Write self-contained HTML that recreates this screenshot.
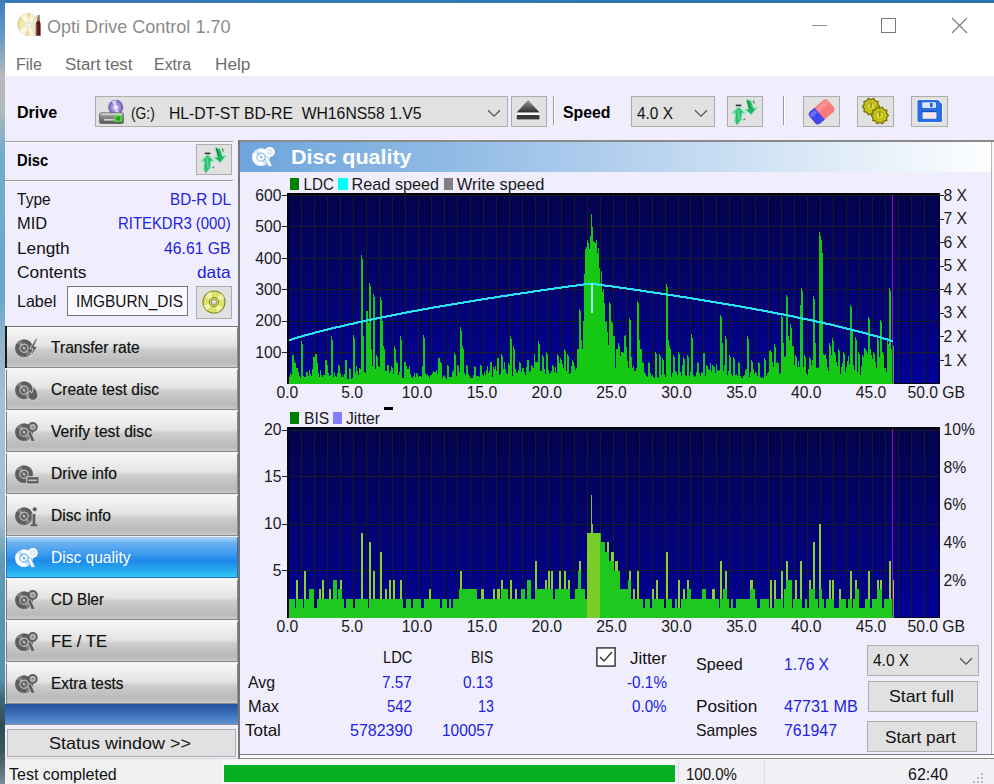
<!DOCTYPE html>
<html><head><meta charset="utf-8"><title>Opti Drive Control 1.70</title>
<style>
html,body{margin:0;padding:0;}
body{width:994px;height:784px;overflow:hidden;position:relative;background:#f0eefd;font-family:"Liberation Sans",sans-serif;}
.abs,.t,.btn,.nav,.tb{position:absolute;}
.t{white-space:nowrap;transform-origin:0 0;}
.tb{background:#e1e1e1;border:1px solid #adadad;box-sizing:border-box;}
.nav{left:6px;width:232px;height:41px;box-sizing:border-box;border:1px solid #8a8a8a;border-top-color:#fafafa;border-left-color:#7a7a7a;
 background:linear-gradient(#f6f6f6 0%,#e4e4e4 45%,#cdcdcd 55%,#b9b9b9 88%,#c9c9c9 100%);}
.nav.sel{background:linear-gradient(#a6d2f7 0%,#6cb2f1 12%,#3f9bee 40%,#1e88e8 58%,#25a6ee 80%,#31c6f3 100%);border-color:#2a6fc0;border-top-color:#9cc8f4;}
.btn{background:#e1e1e1;border:1px solid #adadad;box-sizing:border-box;}
</style></head><body>

<div class="abs" style="left:0;top:0;width:994px;height:3px;background:linear-gradient(90deg,#3c78b4,#2f7ab2 50%,#2a74aa);"></div>
<div class="abs" style="left:0;top:0;width:5px;height:784px;background:linear-gradient(#3f7dbd 0px,#6c9cc8 40px,#b4bab6 75px,#b0bab8 110px,#74aacb 150px,#6aa6c9 300px,#8fb4cc 340px,#a9c0d0 400px,#a6bfcf 520px,#5f9bb4 560px,#5690a8 680px,#3f6676 700px,#2f4c56 725px,#3c545c 750px,#5c7078 770px,#7c8c90 784px);"></div>
<div class="abs" style="left:5px;top:3px;width:989px;height:73px;background:#fff;"></div>
<svg class="abs" style="left:16px;top:12px" width="26" height="26" viewBox="16 12 26 26">
<defs><radialGradient id="cdg" cx="50%" cy="50%" r="50%"><stop offset="0" stop-color="#ffffff"/><stop offset="0.2" stop-color="#f0ead0"/><stop offset="0.55" stop-color="#f3e8b0"/><stop offset="0.9" stop-color="#ecdc9c"/><stop offset="1" stop-color="#cfbf88"/></radialGradient></defs>
<circle cx="28.6" cy="24.5" r="11.3" fill="url(#cdg)"/>
<path d="M28.6 24.5 L20.5 16.8 A11.3 11.3 0 0 1 26.5 13.4Z M28.6 24.5 L24.5 35 A11.3 11.3 0 0 1 19 30.5Z M28.6 24.5 L31 13.5 A11.3 11.3 0 0 1 35.5 15.6Z M28.6 24.5 L34 34.4 A11.3 11.3 0 0 1 29.5 35.8Z" fill="#fffdf0" opacity="0.75"/>
<circle cx="28.6" cy="24.5" r="2.6" fill="#e4e0d4"/>
<circle cx="28.9" cy="24.9" r="1.3" fill="#ffffff"/>
<rect x="33.2" y="16" width="2.8" height="19.5" fill="#ece6dc" opacity="0.9"/>
<path d="M37.9 15 L39.4 15 L39.6 21 Q40.6 22.6 40.6 24.4 L40.6 35.8 L35.8 35.8 L35.8 24.4 Q35.8 22.6 37.4 21Z" fill="#5c1618"/>
<path d="M37.9 15 L39.4 15 L39.6 21 L37.4 21Z" fill="#8a8a7c"/>
<path d="M36.3 24.6 L37.2 24.2 L37.2 35 L36.3 35Z" fill="#a88484" opacity="0.8"/>
</svg>
<span class="t" id="t0" style="left:46.5px;top:17.8px;font-size:18.6px;line-height:18.6px;color:#8c8c8c;transform:scaleX(0.9703);">Opti Drive Control 1.70</span>
<svg class="abs" style="left:800px;top:10px" width="180" height="32" viewBox="0 0 180 32" shape-rendering="crispEdges">
<rect x="12" y="15" width="15" height="1" fill="#8f8f8f"/>
<rect x="81.5" y="8.5" width="14" height="14" fill="none" stroke="#7a7a7a" stroke-width="1"/>
<g shape-rendering="geometricPrecision" stroke="#7a7a7a" stroke-width="1.1"><line x1="152" y1="8" x2="167" y2="23"/><line x1="167" y1="8" x2="152" y2="23"/></g>
</svg>
<span class="t" id="t1" style="left:16.2px;top:55.8px;font-size:17.3px;line-height:17.3px;color:#6c6c6c;transform:scaleX(0.9261);">File</span>
<span class="t" id="t2" style="left:64.6px;top:55.8px;font-size:17.3px;line-height:17.3px;color:#6c6c6c;transform:scaleX(0.9746);">Start test</span>
<span class="t" id="t3" style="left:154.3px;top:55.8px;font-size:17.3px;line-height:17.3px;color:#6c6c6c;transform:scaleX(0.9221);">Extra</span>
<span class="t" id="t4" style="left:214.5px;top:55.8px;font-size:17.3px;line-height:17.3px;color:#6c6c6c;transform:scaleX(0.9931);">Help</span>
<span class="t" id="t5" style="left:17.3px;top:103.7px;font-size:16.4px;line-height:16.4px;color:#000;font-weight:bold;transform:scaleX(0.9801);">Drive</span>
<div class="tb" style="left:95px;top:96px;width:413px;height:31px;"></div>
<svg class="abs" style="left:98px;top:98px" width="28" height="28" viewBox="98 98 28 28">
<defs><radialGradient id="dg" cx="50%" cy="50%" r="55%"><stop offset="0" stop-color="#f4eeff"/><stop offset="0.45" stop-color="#a894dc"/><stop offset="1" stop-color="#5c4aa0"/></radialGradient>
<linearGradient id="db" x1="0" y1="0" x2="0" y2="1"><stop offset="0" stop-color="#c4c4c4"/><stop offset="0.35" stop-color="#8c8c8c"/><stop offset="1" stop-color="#585858"/></linearGradient></defs>
<circle cx="115.7" cy="107.3" r="7.5" fill="url(#dg)"/>
<path d="M115.7 107.3 L111.5 101.5 A7.5 7.5 0 0 1 116.5 99.9Z M115.7 107.3 L119.9 113 A7.5 7.5 0 0 1 114.9 114.7Z" fill="#efe8ff" opacity="0.75"/>
<circle cx="115.7" cy="107.3" r="1.6" fill="#f8f4ff"/>
<rect x="99.6" y="112.8" width="23.8" height="10.6" rx="1.5" fill="url(#db)" stroke="#5a5a5a" stroke-width="0.8"/>
<rect x="101" y="113.5" width="21" height="1.6" fill="#d8d8d8" opacity="0.8"/>
<rect x="104" y="119.2" width="10" height="1.3" fill="#e8e8e8"/>
<rect x="114.2" y="115" width="8" height="7" rx="1.3" fill="#58d048"/>
<circle cx="118.2" cy="118.5" r="2.2" fill="#2c9a24"/>
</svg>
<span class="t" id="t6" style="left:130.7px;top:105.0px;font-size:16.5px;line-height:16.5px;color:#111;transform:scaleX(0.8374);">(G:)</span>
<span class="t" id="t7" style="left:168.5px;top:105.0px;font-size:16.5px;line-height:16.5px;color:#111;transform:scaleX(0.9540);">HL-DT-ST BD-RE&nbsp; WH16NS58 1.V5</span>
<svg class="abs" style="left:487px;top:109px" width="14" height="9" viewBox="0 0 14 9"><path d="M1 1.2 L7 7.2 L13 1.2" fill="none" stroke="#555" stroke-width="1.25"/></svg>
<div class="tb" style="left:511px;top:96px;width:36px;height:31px;"></div>
<svg class="abs" style="left:511px;top:96px" width="36" height="31" viewBox="511 96 36 31">
<defs><linearGradient id="ej" x1="0" y1="0" x2="0" y2="1"><stop offset="0" stop-color="#9a9a9a"/><stop offset="1" stop-color="#2c2c2c"/></linearGradient></defs>
<path d="M528.1 100 L539.6 112.6 L516.6 112.6Z" fill="url(#ej)"/>
<rect x="516.8" y="112.8" width="22.6" height="2.2" fill="#f8f8f8"/>
<rect x="516.8" y="115" width="22.6" height="4.4" fill="#3a3a3a"/>
</svg>
<div class="abs" style="left:553px;top:96px;width:1px;height:29px;background:#9a9a9a;"></div><div class="abs" style="left:554px;top:96px;width:1px;height:29px;background:#fff;"></div>
<span class="t" id="t8" style="left:563.0px;top:103.7px;font-size:16.4px;line-height:16.4px;color:#000;font-weight:bold;transform:scaleX(0.9654);">Speed</span>
<div class="tb" style="left:631px;top:96px;width:84px;height:31px;"></div>
<span class="t" id="t9" style="left:636.5px;top:105.0px;font-size:16.5px;line-height:16.5px;color:#111;transform:scaleX(0.9343);">4.0 X</span>
<svg class="abs" style="left:694px;top:109px" width="14" height="9" viewBox="0 0 14 9"><path d="M1 1.2 L7 7.2 L13 1.2" fill="none" stroke="#555" stroke-width="1.25"/></svg>
<div class="tb" style="left:727px;top:96px;width:36px;height:31px;"></div>
<svg class="abs" style="left:727px;top:96px" width="36" height="31" viewBox="0 0 36 31">
<path d="M11.7 10.6 L18.2 17.2 L15 17 L14.6 23.5 L11 27.8 L7.8 26.2 L8.2 17 L5.2 17.2Z" fill="#2cc070" stroke="#8fe6bc" stroke-width="1.1" stroke-linejoin="round"/>
<path d="M11.2 14 L12 24" stroke="#5ad898" stroke-width="1.6" fill="none"/>
<path d="M19.4 3.4 L24.2 4.8 L26.6 12.2 L30 11.8 L24.2 18.8 L17.8 13.4 L21.4 13 Z" fill="#1fb862" stroke="#8fe6bc" stroke-width="1" stroke-linejoin="round"/>
<path d="M20.4 4.4 L23 12.5" stroke="#178048" stroke-width="1.5" fill="none"/>
<rect x="8.8" y="8.6" width="5.6" height="1.6" fill="#333"/>
<path d="M26.2 4.5 l1.2 3 M16.6 24.2 l1.4 -1.6 M9.4 26.8 l1 1.6" stroke="#3a7a52" stroke-width="1.1"/>
</svg>
<div class="abs" style="left:783px;top:96px;width:1px;height:29px;background:#9a9a9a;"></div><div class="abs" style="left:784px;top:96px;width:1px;height:29px;background:#fff;"></div>
<div class="tb" style="left:803px;top:96px;width:37px;height:31px;"></div>
<svg class="abs" style="left:803px;top:96px" width="37" height="31" viewBox="803 96 37 31">
<g transform="rotate(-41 821.5 112)">
<rect x="809.5" y="104.2" width="24.5" height="15.6" rx="3.8" fill="#f87c7c"/>
<path d="M813.3 104.2 L819 104.2 L819 119.8 L813.3 119.8 A3.8 3.8 0 0 1 809.5 116 L809.5 108 A3.8 3.8 0 0 1 813.3 104.2Z" fill="#4448ec"/>
<rect x="810.5" y="106" width="7.5" height="4" rx="2" fill="#7478ff" opacity="0.8"/>
<rect x="819.5" y="106" width="13.5" height="4.5" rx="2" fill="#fc9c9c" opacity="0.8"/>
</g></svg>
<div class="tb" style="left:857px;top:96px;width:37px;height:31px;"></div>
<svg class="abs" style="left:857px;top:96px" width="37" height="31" viewBox="857 96 37 31"><polygon points="879.6,106.6 877.7,108.8 878.0,111.7 875.1,112.3 873.7,114.8 871.0,113.7 868.3,114.8 866.9,112.3 864.0,111.7 864.3,108.8 862.4,106.6 864.3,104.4 864.0,101.5 866.9,100.9 868.3,98.4 871.0,99.5 873.7,98.4 875.1,100.9 878.0,101.5 877.7,104.4" fill="#c6c414" stroke="#747208" stroke-width="1.3"/><circle cx="871" cy="106.6" r="3.9" fill="#dede28" stroke="#9a980c" stroke-width="0.6"/><rect x="870.2" y="102.3" width="1.6" height="6.0" fill="#8a8a60"/><polygon points="888.4,115.4 886.5,117.6 886.8,120.5 883.9,121.1 882.5,123.6 879.8,122.5 877.1,123.6 875.7,121.1 872.8,120.5 873.1,117.6 871.2,115.4 873.1,113.2 872.8,110.3 875.7,109.7 877.1,107.2 879.8,108.3 882.5,107.2 883.9,109.7 886.8,110.3 886.5,113.2" fill="#c6c414" stroke="#747208" stroke-width="1.3"/><circle cx="879.8" cy="115.4" r="3.9" fill="#dede28" stroke="#9a980c" stroke-width="0.6"/><rect x="879.0" y="111.1" width="1.6" height="6.0" fill="#8a8a60"/></svg>
<div class="tb" style="left:911px;top:96px;width:37px;height:31px;"></div>
<svg class="abs" style="left:911px;top:96px" width="37" height="31" viewBox="911 96 37 31">
<path d="M919 100 L938 100 L942 104 L942 120.5 Q942 122 940.5 122 L919 122 Q917.4 122 917.4 120.5 L917.4 101.6 Q917.4 100 919 100Z" fill="#2a6ce4" stroke="#f4f8ff" stroke-width="1.6" paint-order="stroke"/>
<rect x="922.2" y="102.3" width="13.8" height="5.6" rx="0.8" fill="#d4e6ff"/>
<rect x="930" y="103" width="2.6" height="4.2" fill="#2a5cd0"/>
<rect x="922" y="110.8" width="15" height="1.2" fill="#1c4cb4"/>
<rect x="922.6" y="112.2" width="13.8" height="6.6" rx="0.6" fill="#f6e8e8"/>
</svg>
<div class="abs" style="left:5px;top:141px;width:228px;height:1px;background:#9c9c9c;"></div><div class="abs" style="left:5px;top:142px;width:228px;height:1px;background:#fff;"></div>
<div class="abs" style="left:5px;top:180px;width:228px;height:1px;background:#9c9c9c;"></div><div class="abs" style="left:5px;top:181px;width:228px;height:1px;background:#fff;"></div>
<span class="t" id="t10" style="left:17.3px;top:151.7px;font-size:16.4px;line-height:16.4px;color:#000;font-weight:bold;transform:scaleX(0.9011);">Disc</span>
<div class="tb" style="left:196px;top:144px;width:36px;height:31px;"></div>
<svg class="abs" style="left:196px;top:144px" width="36" height="31" viewBox="0 0 36 31">
<path d="M11.7 10.6 L18.2 17.2 L15 17 L14.6 23.5 L11 27.8 L7.8 26.2 L8.2 17 L5.2 17.2Z" fill="#2cc070" stroke="#8fe6bc" stroke-width="1.1" stroke-linejoin="round"/>
<path d="M11.2 14 L12 24" stroke="#5ad898" stroke-width="1.6" fill="none"/>
<path d="M19.4 3.4 L24.2 4.8 L26.6 12.2 L30 11.8 L24.2 18.8 L17.8 13.4 L21.4 13 Z" fill="#1fb862" stroke="#8fe6bc" stroke-width="1" stroke-linejoin="round"/>
<path d="M20.4 4.4 L23 12.5" stroke="#178048" stroke-width="1.5" fill="none"/>
<rect x="8.8" y="8.6" width="5.6" height="1.6" fill="#333"/>
<path d="M26.2 4.5 l1.2 3 M16.6 24.2 l1.4 -1.6 M9.4 26.8 l1 1.6" stroke="#3a7a52" stroke-width="1.1"/>
</svg>
<span class="t" id="t11" style="left:17.3px;top:190.7px;font-size:16.5px;line-height:16.5px;color:#111;transform:scaleX(0.9418);">Type</span>
<span class="t" id="t12" style="left:169.6px;top:190.7px;font-size:16.5px;line-height:16.5px;color:#2222dd;transform:scaleX(0.9240);">BD-R DL</span>
<span class="t" id="t13" style="left:17.3px;top:214.9px;font-size:16.5px;line-height:16.5px;color:#111;transform:scaleX(0.9950);">MID</span>
<span class="t" id="t14" style="left:118.0px;top:214.9px;font-size:16.5px;line-height:16.5px;color:#2222dd;transform:scaleX(0.9029);">RITEKDR3 (000)</span>
<span class="t" id="t15" style="left:17.3px;top:239.6px;font-size:16.5px;line-height:16.5px;color:#111;transform:scaleX(1.0442);">Length</span>
<span class="t" id="t16" style="left:164.0px;top:239.6px;font-size:16.5px;line-height:16.5px;color:#2222dd;transform:scaleX(0.9553);">46.61 GB</span>
<span class="t" id="t17" style="left:17.3px;top:263.8px;font-size:16.5px;line-height:16.5px;color:#111;transform:scaleX(1.0508);">Contents</span>
<span class="t" id="t18" style="left:197.0px;top:263.8px;font-size:16.5px;line-height:16.5px;color:#2222dd;transform:scaleX(1.0459);">data</span>
<span class="t" id="t19" style="left:17.3px;top:292.8px;font-size:16.5px;line-height:16.5px;color:#111;transform:scaleX(0.9734);">Label</span>
<div class="abs" style="left:67px;top:286.3px;width:121px;height:29.4px;box-sizing:border-box;background:#f9f8ff;border:1.4px solid #767676;"></div>
<span class="t" id="t20" style="left:76.0px;top:292.8px;font-size:16.5px;line-height:16.5px;color:#111;transform:scaleX(0.9336);">IMGBURN_DIS</span>
<div class="tb" style="left:196px;top:286px;width:36px;height:33px;"></div>
<svg class="abs" style="left:200.5px;top:289.2px" width="26" height="26" viewBox="0 0 26 26">
<circle cx="13" cy="13" r="11" fill="#dde16a" stroke="#85882c" stroke-width="1.1"/>
<path d="M13 13 L4.2 7.4 A11 11 0 0 1 9.6 2.6Z M13 13 L21.8 18.6 A11 11 0 0 1 16.4 23.4Z M13 13 L20 4.6 A11 11 0 0 1 23.4 9.4Z M13 13 L6 21.4 A11 11 0 0 1 2.6 16.6Z" fill="#f3f5b4" opacity="0.85"/>
<circle cx="13" cy="13" r="4.6" fill="#cfd25c" stroke="#8a8c34" stroke-width="1"/>
<circle cx="13" cy="13" r="2.7" fill="#dcdcdc" stroke="#8e9040" stroke-width="0.8"/>
</svg>
<div class="abs" style="left:5px;top:325.5px;width:233px;height:1.2px;background:#74747a;"></div>
<div class="nav" style="top:327px;"></div>
<svg class="abs" style="left:13.5px;top:336.8px" width="29" height="24.6" viewBox="0 0 26 22"><circle cx="9" cy="10" r="8" fill="#5e5e5e"/><path d="M9 10 L2.5 5.5 A8 8 0 0 1 6.5 2.4Z M9 10 L15.5 14.5 A8 8 0 0 1 11.5 17.6Z" fill="#dcdcdc" opacity="0.28"/><circle cx="9" cy="10" r="3.7" fill="none" stroke="#dcdcdc" stroke-width="1.1" opacity="0.75"/><circle cx="9" cy="10" r="1.2" fill="#dcdcdc" opacity="0.7"/><path d="M19.5 1.5 L14.2 10.5 L17 10.5 L14.5 18.5 L21 8.5 L18 8.5 L21 1.5Z" fill="#5e5e5e" stroke="#dcdcdc" stroke-width="0.7"/></svg>
<span class="t" id="t21" style="left:50.5px;top:339.1px;font-size:17px;line-height:17px;color:#111;transform:scaleX(0.9174);text-shadow:0 0 1px rgba(0,0,0,0.35);">Transfer rate</span>
<div class="nav" style="top:369px;"></div>
<svg class="abs" style="left:13.5px;top:378.8px" width="29" height="24.6" viewBox="0 0 26 22"><circle cx="9" cy="10" r="8" fill="#5e5e5e"/><path d="M9 10 L2.5 5.5 A8 8 0 0 1 6.5 2.4Z M9 10 L15.5 14.5 A8 8 0 0 1 11.5 17.6Z" fill="#dcdcdc" opacity="0.28"/><circle cx="9" cy="10" r="3.7" fill="none" stroke="#dcdcdc" stroke-width="1.1" opacity="0.75"/><circle cx="9" cy="10" r="1.2" fill="#dcdcdc" opacity="0.7"/><path d="M17 6.5 Q21.5 10.5 21.5 14.5 A4.6 4.6 0 0 1 12.3 14.5 Q12.5 12 14.5 10.5 Q15 12.5 16 12.5 Q17.5 10 17 6.5Z" fill="#5e5e5e" stroke="#dcdcdc" stroke-width="0.8"/></svg>
<span class="t" id="t22" style="left:50.5px;top:381.1px;font-size:17px;line-height:17px;color:#111;transform:scaleX(0.9144);text-shadow:0 0 1px rgba(0,0,0,0.35);">Create test disc</span>
<div class="nav" style="top:411px;"></div>
<svg class="abs" style="left:13.5px;top:420.8px" width="29" height="24.6" viewBox="0 0 26 22"><circle cx="9" cy="10" r="8" fill="#5e5e5e"/><path d="M9 10 L2.5 5.5 A8 8 0 0 1 6.5 2.4Z M9 10 L15.5 14.5 A8 8 0 0 1 11.5 17.6Z" fill="#dcdcdc" opacity="0.28"/><circle cx="9" cy="10" r="3.7" fill="none" stroke="#dcdcdc" stroke-width="1.1" opacity="0.75"/><circle cx="9" cy="10" r="1.2" fill="#dcdcdc" opacity="0.7"/><path d="M14.5 8.5 L19 18 L15.6 18.4 L12.5 11Z" fill="#5e5e5e" stroke="#dcdcdc" stroke-width="0.6"/><circle cx="16.8" cy="5.4" r="3.6" fill="#b8b8b8" stroke="#5e5e5e" stroke-width="1.8"/><circle cx="16.8" cy="5.4" r="1.2" fill="#5e5e5e" opacity="0.5"/></svg>
<span class="t" id="t23" style="left:50.5px;top:423.1px;font-size:17px;line-height:17px;color:#111;transform:scaleX(0.9215);text-shadow:0 0 1px rgba(0,0,0,0.35);">Verify test disc</span>
<div class="nav" style="top:453px;"></div>
<svg class="abs" style="left:13.5px;top:462.8px" width="29" height="24.6" viewBox="0 0 26 22"><circle cx="9" cy="10" r="8" fill="#5e5e5e"/><path d="M9 10 L2.5 5.5 A8 8 0 0 1 6.5 2.4Z M9 10 L15.5 14.5 A8 8 0 0 1 11.5 17.6Z" fill="#dcdcdc" opacity="0.28"/><circle cx="9" cy="10" r="3.7" fill="none" stroke="#dcdcdc" stroke-width="1.1" opacity="0.75"/><circle cx="9" cy="10" r="1.2" fill="#dcdcdc" opacity="0.7"/><rect x="11.5" y="12.2" width="11" height="6.6" rx="1" fill="#5e5e5e" stroke="#dcdcdc" stroke-width="0.8"/><rect x="13.2" y="14.8" width="7.6" height="1.4" fill="#dcdcdc" opacity="0.8"/></svg>
<span class="t" id="t24" style="left:50.5px;top:465.1px;font-size:17px;line-height:17px;color:#111;transform:scaleX(0.9191);text-shadow:0 0 1px rgba(0,0,0,0.35);">Drive info</span>
<div class="nav" style="top:495px;"></div>
<svg class="abs" style="left:13.5px;top:504.8px" width="29" height="24.6" viewBox="0 0 26 22"><circle cx="9" cy="10" r="8" fill="#5e5e5e"/><path d="M9 10 L2.5 5.5 A8 8 0 0 1 6.5 2.4Z M9 10 L15.5 14.5 A8 8 0 0 1 11.5 17.6Z" fill="#dcdcdc" opacity="0.28"/><circle cx="9" cy="10" r="3.7" fill="none" stroke="#dcdcdc" stroke-width="1.1" opacity="0.75"/><circle cx="9" cy="10" r="1.2" fill="#dcdcdc" opacity="0.7"/><rect x="16.2" y="7.8" width="3.4" height="10.6" fill="#5e5e5e" stroke="#dcdcdc" stroke-width="0.7"/><circle cx="18.6" cy="3.8" r="1.9" fill="#5e5e5e"/><rect x="15" y="17.2" width="5.8" height="1.8" fill="#5e5e5e"/></svg>
<span class="t" id="t25" style="left:50.5px;top:507.1px;font-size:17px;line-height:17px;color:#111;transform:scaleX(0.9204);text-shadow:0 0 1px rgba(0,0,0,0.35);">Disc info</span>
<div class="nav sel" style="top:537px;"></div>
<svg class="abs" style="left:13.5px;top:546.8px" width="29" height="24.6" viewBox="0 0 26 22"><circle cx="9" cy="10" r="8" fill="#fff"/><path d="M9 10 L2.5 5.5 A8 8 0 0 1 6.5 2.4Z M9 10 L15.5 14.5 A8 8 0 0 1 11.5 17.6Z" fill="#3a98ee" opacity="0.28"/><circle cx="9" cy="10" r="3.7" fill="none" stroke="#3a98ee" stroke-width="1.1" opacity="0.75"/><circle cx="9" cy="10" r="1.2" fill="#3a98ee" opacity="0.7"/><path d="M14.5 8.5 L19 18 L15.6 18.4 L12.5 11Z" fill="#fff" stroke="#3a98ee" stroke-width="0.6"/><circle cx="16.8" cy="5.4" r="3.6" fill="#d6e8fa" stroke="#fff" stroke-width="1.8"/><circle cx="16.8" cy="5.4" r="1.2" fill="#fff" opacity="0.5"/></svg>
<span class="t" id="t26" style="left:50.5px;top:549.1px;font-size:17px;line-height:17px;color:#fff;transform:scaleX(0.9146);">Disc quality</span>
<div class="nav" style="top:579px;"></div>
<svg class="abs" style="left:13.5px;top:588.8px" width="29" height="24.6" viewBox="0 0 26 22"><circle cx="9" cy="10" r="8" fill="#5e5e5e"/><path d="M9 10 L2.5 5.5 A8 8 0 0 1 6.5 2.4Z M9 10 L15.5 14.5 A8 8 0 0 1 11.5 17.6Z" fill="#dcdcdc" opacity="0.28"/><circle cx="9" cy="10" r="3.7" fill="none" stroke="#dcdcdc" stroke-width="1.1" opacity="0.75"/><circle cx="9" cy="10" r="1.2" fill="#dcdcdc" opacity="0.7"/><path d="M14.5 8.5 L19 18 L15.6 18.4 L12.5 11Z" fill="#5e5e5e" stroke="#dcdcdc" stroke-width="0.6"/><circle cx="16.8" cy="5.4" r="3.6" fill="#b8b8b8" stroke="#5e5e5e" stroke-width="1.8"/><circle cx="16.8" cy="5.4" r="1.2" fill="#5e5e5e" opacity="0.5"/></svg>
<span class="t" id="t27" style="left:50.5px;top:591.1px;font-size:17px;line-height:17px;color:#111;transform:scaleX(0.8905);text-shadow:0 0 1px rgba(0,0,0,0.35);">CD Bler</span>
<div class="nav" style="top:621px;"></div>
<svg class="abs" style="left:13.5px;top:630.8px" width="29" height="24.6" viewBox="0 0 26 22"><circle cx="9" cy="10" r="8" fill="#5e5e5e"/><path d="M9 10 L2.5 5.5 A8 8 0 0 1 6.5 2.4Z M9 10 L15.5 14.5 A8 8 0 0 1 11.5 17.6Z" fill="#dcdcdc" opacity="0.28"/><circle cx="9" cy="10" r="3.7" fill="none" stroke="#dcdcdc" stroke-width="1.1" opacity="0.75"/><circle cx="9" cy="10" r="1.2" fill="#dcdcdc" opacity="0.7"/><path d="M14.5 8.5 L19 18 L15.6 18.4 L12.5 11Z" fill="#5e5e5e" stroke="#dcdcdc" stroke-width="0.6"/><circle cx="16.8" cy="5.4" r="3.6" fill="#b8b8b8" stroke="#5e5e5e" stroke-width="1.8"/><circle cx="16.8" cy="5.4" r="1.2" fill="#5e5e5e" opacity="0.5"/></svg>
<span class="t" id="t28" style="left:50.5px;top:633.1px;font-size:17px;line-height:17px;color:#111;transform:scaleX(0.9771);text-shadow:0 0 1px rgba(0,0,0,0.35);">FE / TE</span>
<div class="nav" style="top:663px;"></div>
<svg class="abs" style="left:13.5px;top:672.8px" width="29" height="24.6" viewBox="0 0 26 22"><circle cx="9" cy="10" r="8" fill="#5e5e5e"/><path d="M9 10 L2.5 5.5 A8 8 0 0 1 6.5 2.4Z M9 10 L15.5 14.5 A8 8 0 0 1 11.5 17.6Z" fill="#dcdcdc" opacity="0.28"/><circle cx="9" cy="10" r="3.7" fill="none" stroke="#dcdcdc" stroke-width="1.1" opacity="0.75"/><circle cx="9" cy="10" r="1.2" fill="#dcdcdc" opacity="0.7"/><path d="M14.5 8.5 L19 18 L15.6 18.4 L12.5 11Z" fill="#5e5e5e" stroke="#dcdcdc" stroke-width="0.6"/><circle cx="16.8" cy="5.4" r="3.6" fill="#b8b8b8" stroke="#5e5e5e" stroke-width="1.8"/><circle cx="16.8" cy="5.4" r="1.2" fill="#5e5e5e" opacity="0.5"/></svg>
<span class="t" id="t29" style="left:50.5px;top:675.1px;font-size:17px;line-height:17px;color:#111;transform:scaleX(0.9027);text-shadow:0 0 1px rgba(0,0,0,0.35);">Extra tests</span>
<div class="abs" style="left:5px;top:326px;width:1.6px;height:42px;background:#1c1c1c;"></div>
<div class="abs" style="left:5px;top:704px;width:233px;height:21px;background:linear-gradient(#26509c,#3c70ba 50%,#6496d4);"></div><div class="abs" style="left:5px;top:724px;width:233px;height:1px;background:#8c8c94;"></div>
<div class="btn" style="left:7px;top:729px;width:229px;height:28px;"></div>
<span class="t" id="t30" style="left:49.0px;top:734.8px;font-size:16.5px;line-height:16.5px;color:#111;transform:scaleX(1.0902);">Status window &gt;&gt;</span>
<div class="abs" style="left:238px;top:140px;width:756px;height:2px;background:#8a8a8a;"></div>
<div class="abs" style="left:238px;top:140px;width:2px;height:619px;background:#767676;"></div>
<div class="abs" style="left:991px;top:142px;width:1px;height:612px;background:#b4b4b4;"></div><div class="abs" style="left:992px;top:142px;width:2px;height:612px;background:#f8f8f8;"></div>
<div class="abs" style="left:240px;top:754px;width:754px;height:1px;background:#7c7c7c;"></div><div class="abs" style="left:240px;top:755px;width:754px;height:3px;background:#fafaff;"></div><div class="abs" style="left:238px;top:758px;width:756px;height:1px;background:#8a8a8a;"></div>
<div class="abs" style="left:240px;top:142px;width:751px;height:30px;background:linear-gradient(90deg,#6fa5dc 0%,#8cb8e4 25%,#b2cfed 50%,#d9e8f6 75%,#fdfeff 100%);"></div>
<svg class="abs" style="left:250.5px;top:145.5px" width="29" height="24.6" viewBox="0 0 26 22"><circle cx="9" cy="10" r="8" fill="#fff"/><path d="M9 10 L2.5 5.5 A8 8 0 0 1 6.5 2.4Z M9 10 L15.5 14.5 A8 8 0 0 1 11.5 17.6Z" fill="#78aade" opacity="0.28"/><circle cx="9" cy="10" r="3.7" fill="none" stroke="#78aade" stroke-width="1.1" opacity="0.75"/><circle cx="9" cy="10" r="1.2" fill="#78aade" opacity="0.7"/><path d="M14.5 8.5 L19 18 L15.6 18.4 L12.5 11Z" fill="#fff" stroke="#78aade" stroke-width="0.6"/><circle cx="16.8" cy="5.4" r="3.6" fill="#d6e8fa" stroke="#fff" stroke-width="1.8"/><circle cx="16.8" cy="5.4" r="1.2" fill="#fff" opacity="0.5"/></svg>
<span class="t" id="t31" style="left:291.0px;top:147.2px;font-size:20.5px;line-height:20.5px;color:#fff;font-weight:bold;transform:scaleX(1.0473);">Disc quality</span>
<svg class="abs" style="left:240px;top:173px" width="750" height="240" viewBox="240 173 750 240" shape-rendering="crispEdges" font-family="Liberation Sans, sans-serif">
<defs><linearGradient id="bgldc" x1="0" y1="0" x2="0" y2="1"><stop offset="0" stop-color="#03034c"/><stop offset="0.5" stop-color="#03036e"/><stop offset="1" stop-color="#020298"/></linearGradient></defs>
<rect x="287" y="193" width="653" height="191" fill="#06060c"/>
<rect x="289" y="195" width="650" height="188" fill="url(#bgldc)"/>
<path d="M301 195v188 M314 195v188 M327 195v188 M340 195v188 M353 195v188 M366 195v188 M379 195v188 M392 195v188 M405 195v188 M418 195v188 M431 195v188 M444 195v188 M457 195v188 M470 195v188 M483 195v188 M496 195v188 M509 195v188 M522 195v188 M535 195v188 M548 195v188 M561 195v188 M574 195v188 M587 195v188 M600 195v188 M613 195v188 M626 195v188 M639 195v188 M652 195v188 M665 195v188 M678 195v188 M690 195v188 M703 195v188 M716 195v188 M729 195v188 M742 195v188 M755 195v188 M768 195v188 M781 195v188 M794 195v188 M807 195v188 M820 195v188 M833 195v188 M846 195v188 M859 195v188 M872 195v188 M885 195v188 M898 195v188 M911 195v188 M924 195v188 M289 352h650 M289 321h650 M289 289h650 M289 258h650 M289 226h650 M289 195h650" stroke="#1a1a24" stroke-width="1.6" fill="none" transform="translate(0.5,0.5)"/>
<path d="M289 383.5v-6.1h1v6.1zM290 383.5v-10.3h1v10.3zM291 383.5v-8.3h1v8.3zM292 383.5v-28.3h1v28.3zM293 383.5v-28.3h1v28.3zM294 383.5v-22.0h1v22.0zM295 383.5v-20.4h1v20.4zM296 383.5v-16.0h1v16.0zM297 383.5v-15.3h1v15.3zM298 383.5v-11.3h1v11.3zM299 383.5v-7.1h1v7.1zM300 383.5v-5.2h1v5.2zM301 383.5v-42.4h1v42.4zM302 383.5v-39.4h1v39.4zM303 383.5v-7.4h1v7.4zM304 383.5v-7.0h1v7.0zM305 383.5v-6.5h1v6.5zM306 383.5v-11.4h1v11.4zM307 383.5v-11.7h1v11.7zM308 383.5v-7.9h1v7.9zM309 383.5v-13.9h1v13.9zM310 383.5v-9.3h1v9.3zM311 383.5v-7.2h1v7.2zM312 383.5v-14.6h1v14.6zM313 383.5v-26.7h1v26.7zM314 383.5v-26.7h1v26.7zM315 383.5v-29.8h1v29.8zM316 383.5v-29.8h1v29.8zM317 383.5v-20.4h1v20.4zM318 383.5v-10.9h1v10.9zM319 383.5v-7.0h1v7.0zM320 383.5v-13.1h1v13.1zM321 383.5v-8.1h1v8.1zM322 383.5v-7.0h1v7.0zM323 383.5v-8.6h1v8.6zM324 383.5v-8.6h1v8.6zM325 383.5v-23.6h1v23.6zM326 383.5v-23.6h1v23.6zM327 383.5v-18.8h1v18.8zM328 383.5v-11.0h1v11.0zM329 383.5v-8.0h1v8.0zM330 383.5v-8.3h1v8.3zM331 383.5v-47.1h1v47.1zM332 383.5v-43.8h1v43.8zM333 383.5v-6.3h1v6.3zM334 383.5v-11.6h1v11.6zM335 383.5v-7.6h1v7.6zM336 383.5v-6.3h1v6.3zM337 383.5v-10.8h1v10.8zM338 383.5v-18.8h1v18.8zM339 383.5v-17.5h1v17.5zM340 383.5v-10.2h1v10.2zM341 383.5v-7.0h1v7.0zM342 383.5v-8.7h1v8.7zM343 383.5v-6.2h1v6.2zM344 383.5v-9.8h1v9.8zM345 383.5v-23.6h1v23.6zM346 383.5v-23.6h1v23.6zM347 383.5v-4.8h1v4.8zM348 383.5v-4.6h1v4.6zM349 383.5v-15.7h1v15.7zM350 383.5v-14.6h1v14.6zM351 383.5v-4.3h1v4.3zM352 383.5v-6.0h1v6.0zM353 383.5v-48.7h1v48.7zM354 383.5v-45.3h1v45.3zM355 383.5v-10.1h1v10.1zM356 383.5v-17.2h1v17.2zM357 383.5v-12.4h1v12.4zM358 383.5v-9.0h1v9.0zM359 383.5v-15.6h1v15.6zM360 383.5v-14.8h1v14.8zM361 383.5v-128.7h1v128.7zM362 383.5v-124.9h1v124.9zM363 383.5v-47.1h1v47.1zM364 383.5v-11.7h1v11.7zM365 383.5v-11.0h1v11.0zM366 383.5v-72.2h1v72.2zM367 383.5v-72.2h1v72.2zM368 383.5v-60.9h1v60.9zM369 383.5v-100.5h1v100.5zM370 383.5v-97.5h1v97.5zM371 383.5v-35.0h1v35.0zM372 383.5v-17.1h1v17.1zM373 383.5v-89.5h1v89.5zM374 383.5v-86.8h1v86.8zM375 383.5v-14.9h1v14.9zM376 383.5v-28.3h1v28.3zM377 383.5v-26.3h1v26.3zM378 383.5v-17.8h1v17.8zM379 383.5v-16.8h1v16.8zM380 383.5v-86.3h1v86.3zM381 383.5v-83.8h1v83.8zM382 383.5v-62.8h1v62.8zM383 383.5v-37.7h1v37.7zM384 383.5v-35.0h1v35.0zM385 383.5v-12.4h1v12.4zM386 383.5v-12.8h1v12.8zM387 383.5v-18.8h1v18.8zM388 383.5v-18.8h1v18.8zM389 383.5v-10.9h1v10.9zM390 383.5v-12.7h1v12.7zM391 383.5v-17.3h1v17.3zM392 383.5v-15.7h1v15.7zM393 383.5v-10.0h1v10.0zM394 383.5v-37.7h1v37.7zM395 383.5v-35.0h1v35.0zM396 383.5v-22.0h1v22.0zM397 383.5v-20.4h1v20.4zM398 383.5v-8.9h1v8.9zM399 383.5v-11.2h1v11.2zM400 383.5v-47.1h1v47.1zM401 383.5v-43.8h1v43.8zM402 383.5v-5.4h1v5.4zM403 383.5v-5.7h1v5.7zM404 383.5v-22.0h1v22.0zM405 383.5v-22.0h1v22.0zM406 383.5v-18.0h1v18.0zM407 383.5v-14.6h1v14.6zM408 383.5v-14.9h1v14.9zM409 383.5v-17.3h1v17.3zM410 383.5v-10.0h1v10.0zM411 383.5v-6.4h1v6.4zM412 383.5v-5.9h1v5.9zM413 383.5v-7.1h1v7.1zM414 383.5v-10.5h1v10.5zM415 383.5v-6.8h1v6.8zM416 383.5v-10.8h1v10.8zM417 383.5v-9.8h1v9.8zM418 383.5v-6.7h1v6.7zM419 383.5v-7.8h1v7.8zM420 383.5v-7.6h1v7.6zM421 383.5v-6.2h1v6.2zM422 383.5v-17.5h1v17.5zM423 383.5v-48.7h1v48.7zM424 383.5v-45.3h1v45.3zM425 383.5v-10.8h1v10.8zM426 383.5v-8.7h1v8.7zM427 383.5v-9.6h1v9.6zM428 383.5v-7.4h1v7.4zM429 383.5v-5.5h1v5.5zM430 383.5v-8.3h1v8.3zM431 383.5v-8.7h1v8.7zM432 383.5v-10.6h1v10.6zM433 383.5v-12.3h1v12.3zM434 383.5v-11.2h1v11.2zM435 383.5v-11.8h1v11.8zM436 383.5v-13.4h1v13.4zM437 383.5v-9.7h1v9.7zM438 383.5v-25.1h1v25.1zM439 383.5v-25.1h1v25.1zM440 383.5v-22.0h1v22.0zM441 383.5v-20.4h1v20.4zM442 383.5v-5.7h1v5.7zM443 383.5v-7.6h1v7.6zM444 383.5v-8.1h1v8.1zM445 383.5v-7.0h1v7.0zM446 383.5v-5.0h1v5.0zM447 383.5v-18.8h1v18.8zM448 383.5v-17.5h1v17.5zM449 383.5v-6.9h1v6.9zM450 383.5v-6.9h1v6.9zM451 383.5v-6.7h1v6.7zM452 383.5v-12.0h1v12.0zM453 383.5v-13.7h1v13.7zM454 383.5v-30.5h1v30.5zM455 383.5v-28.3h1v28.3zM456 383.5v-8.0h1v8.0zM457 383.5v-18.8h1v18.8zM458 383.5v-17.5h1v17.5zM459 383.5v-11.1h1v11.1zM460 383.5v-56.8h1v56.8zM461 383.5v-52.9h1v52.9zM462 383.5v-37.7h1v37.7zM463 383.5v-35.0h1v35.0zM464 383.5v-10.1h1v10.1zM465 383.5v-8.7h1v8.7zM466 383.5v-18.8h1v18.8zM467 383.5v-17.5h1v17.5zM468 383.5v-10.0h1v10.0zM469 383.5v-7.2h1v7.2zM470 383.5v-5.9h1v5.9zM471 383.5v-5.7h1v5.7zM472 383.5v-6.0h1v6.0zM473 383.5v-8.6h1v8.6zM474 383.5v-17.3h1v17.3zM475 383.5v-16.1h1v16.1zM476 383.5v-7.4h1v7.4zM477 383.5v-7.6h1v7.6zM478 383.5v-7.5h1v7.5zM479 383.5v-6.3h1v6.3zM480 383.5v-18.8h1v18.8zM481 383.5v-17.5h1v17.5zM482 383.5v-10.0h1v10.0zM483 383.5v-7.6h1v7.6zM484 383.5v-11.8h1v11.8zM485 383.5v-8.8h1v8.8zM486 383.5v-14.0h1v14.0zM487 383.5v-17.7h1v17.7zM488 383.5v-10.8h1v10.8zM489 383.5v-12.2h1v12.2zM490 383.5v-22.0h1v22.0zM491 383.5v-22.0h1v22.0zM492 383.5v-6.5h1v6.5zM493 383.5v-16.1h1v16.1zM494 383.5v-14.1h1v14.1zM495 383.5v-17.4h1v17.4zM496 383.5v-12.8h1v12.8zM497 383.5v-25.1h1v25.1zM498 383.5v-25.1h1v25.1zM499 383.5v-8.9h1v8.9zM500 383.5v-9.2h1v9.2zM501 383.5v-29.8h1v29.8zM502 383.5v-27.7h1v27.7zM503 383.5v-14.5h1v14.5zM504 383.5v-21.5h1v21.5zM505 383.5v-14.4h1v14.4zM506 383.5v-10.3h1v10.3zM507 383.5v-9.8h1v9.8zM508 383.5v-20.9h1v20.9zM509 383.5v-18.7h1v18.7zM510 383.5v-48.0h1v48.0zM511 383.5v-44.7h1v44.7zM512 383.5v-7.7h1v7.7zM513 383.5v-37.7h1v37.7zM514 383.5v-35.0h1v35.0zM515 383.5v-14.9h1v14.9zM516 383.5v-11.1h1v11.1zM517 383.5v-10.2h1v10.2zM518 383.5v-13.5h1v13.5zM519 383.5v-22.0h1v22.0zM520 383.5v-20.4h1v20.4zM521 383.5v-11.7h1v11.7zM522 383.5v-15.4h1v15.4zM523 383.5v-15.3h1v15.3zM524 383.5v-11.4h1v11.4zM525 383.5v-8.1h1v8.1zM526 383.5v-16.7h1v16.7zM527 383.5v-23.6h1v23.6zM528 383.5v-23.6h1v23.6zM529 383.5v-11.6h1v11.6zM530 383.5v-12.3h1v12.3zM531 383.5v-18.8h1v18.8zM532 383.5v-17.5h1v17.5zM533 383.5v-15.6h1v15.6zM534 383.5v-29.4h1v29.4zM535 383.5v-21.4h1v21.4zM536 383.5v-21.1h1v21.1zM537 383.5v-21.2h1v21.2zM538 383.5v-43.0h1v43.0zM539 383.5v-40.0h1v40.0zM540 383.5v-12.8h1v12.8zM541 383.5v-12.7h1v12.7zM542 383.5v-28.3h1v28.3zM543 383.5v-26.3h1v26.3zM544 383.5v-14.8h1v14.8zM545 383.5v-10.0h1v10.0zM546 383.5v-31.4h1v31.4zM547 383.5v-29.2h1v29.2zM548 383.5v-13.7h1v13.7zM549 383.5v-10.0h1v10.0zM550 383.5v-10.7h1v10.7zM551 383.5v-13.0h1v13.0zM552 383.5v-18.8h1v18.8zM553 383.5v-17.5h1v17.5zM554 383.5v-12.0h1v12.0zM555 383.5v-16.5h1v16.5zM556 383.5v-10.6h1v10.6zM557 383.5v-29.9h1v29.9zM558 383.5v-27.7h1v27.7zM559 383.5v-20.9h1v20.9zM560 383.5v-25.1h1v25.1zM561 383.5v-23.4h1v23.4zM562 383.5v-19.7h1v19.7zM563 383.5v-15.7h1v15.7zM564 383.5v-34.5h1v34.5zM565 383.5v-32.1h1v32.1zM566 383.5v-12.4h1v12.4zM567 383.5v-29.8h1v29.8zM568 383.5v-27.7h1v27.7zM569 383.5v-9.4h1v9.4zM570 383.5v-10.3h1v10.3zM571 383.5v-17.2h1v17.2zM572 383.5v-23.6h1v23.6zM573 383.5v-21.9h1v21.9zM574 383.5v-18.0h1v18.0zM575 383.5v-13.8h1v13.8zM576 383.5v-15.7h1v15.7zM577 383.5v-34.5h1v34.5zM578 383.5v-34.5h1v34.5zM579 383.5v-74.7h1v74.7zM580 383.5v-72.5h1v72.5zM581 383.5v-44.0h1v44.0zM582 383.5v-34.5h1v34.5zM583 383.5v-62.8h1v62.8zM584 383.5v-109.9h1v109.9zM585 383.5v-134.2h1v134.2zM586 383.5v-136.1h1v136.1zM587 383.5v-143.4h1v143.4zM588 383.5v-140.5h1v140.5zM589 383.5v-134.3h1v134.3zM590 383.5v-147.6h1v147.6zM591 383.5v-169.6h1v169.6zM592 383.5v-157.0h1v157.0zM593 383.5v-142.9h1v142.9zM594 383.5v-141.2h1v141.2zM595 383.5v-140.6h1v140.6zM596 383.5v-143.2h1v143.2zM597 383.5v-130.9h1v130.9zM598 383.5v-135.1h1v135.1zM599 383.5v-115.2h1v115.2zM600 383.5v-100.1h1v100.1zM601 383.5v-112.6h1v112.6zM602 383.5v-91.1h1v91.1zM603 383.5v-94.7h1v94.7zM604 383.5v-80.9h1v80.9zM605 383.5v-61.7h1v61.7zM606 383.5v-62.6h1v62.6zM607 383.5v-51.2h1v51.2zM608 383.5v-38.7h1v38.7zM609 383.5v-81.6h1v81.6zM610 383.5v-79.2h1v79.2zM611 383.5v-62.8h1v62.8zM612 383.5v-60.9h1v60.9zM613 383.5v-47.1h1v47.1zM614 383.5v-47.1h1v47.1zM615 383.5v-15.6h1v15.6zM616 383.5v-34.5h1v34.5zM617 383.5v-34.5h1v34.5zM618 383.5v-40.8h1v40.8zM619 383.5v-38.0h1v38.0zM620 383.5v-27.3h1v27.3zM621 383.5v-31.4h1v31.4zM622 383.5v-31.4h1v31.4zM623 383.5v-30.1h1v30.1zM624 383.5v-47.8h1v47.8zM625 383.5v-48.6h1v48.6zM626 383.5v-36.8h1v36.8zM627 383.5v-22.1h1v22.1zM628 383.5v-15.8h1v15.8zM629 383.5v-65.9h1v65.9zM630 383.5v-64.0h1v64.0zM631 383.5v-26.3h1v26.3zM632 383.5v-15.8h1v15.8zM633 383.5v-17.7h1v17.7zM634 383.5v-12.7h1v12.7zM635 383.5v-12.7h1v12.7zM636 383.5v-15.5h1v15.5zM637 383.5v-82.6h1v82.6zM638 383.5v-80.1h1v80.1zM639 383.5v-44.0h1v44.0zM640 383.5v-34.5h1v34.5zM641 383.5v-34.5h1v34.5zM642 383.5v-22.0h1v22.0zM643 383.5v-20.4h1v20.4zM644 383.5v-12.0h1v12.0zM645 383.5v-9.2h1v9.2zM646 383.5v-7.1h1v7.1zM647 383.5v-6.6h1v6.6zM648 383.5v-22.0h1v22.0zM649 383.5v-20.4h1v20.4zM650 383.5v-10.1h1v10.1zM651 383.5v-7.2h1v7.2zM652 383.5v-8.8h1v8.8zM653 383.5v-6.6h1v6.6zM654 383.5v-5.9h1v5.9zM655 383.5v-31.4h1v31.4zM656 383.5v-29.2h1v29.2zM657 383.5v-6.6h1v6.6zM658 383.5v-5.9h1v5.9zM659 383.5v-29.8h1v29.8zM660 383.5v-27.7h1v27.7zM661 383.5v-8.2h1v8.2zM662 383.5v-25.1h1v25.1zM663 383.5v-23.4h1v23.4zM664 383.5v-9.7h1v9.7zM665 383.5v-7.0h1v7.0zM666 383.5v-99.2h1v99.2zM667 383.5v-96.2h1v96.2zM668 383.5v-43.8h1v43.8zM669 383.5v-37.7h1v37.7zM670 383.5v-35.0h1v35.0zM671 383.5v-7.0h1v7.0zM672 383.5v-10.1h1v10.1zM673 383.5v-28.3h1v28.3zM674 383.5v-26.3h1v26.3zM675 383.5v-12.1h1v12.1zM676 383.5v-11.5h1v11.5zM677 383.5v-8.4h1v8.4zM678 383.5v-31.4h1v31.4zM679 383.5v-29.2h1v29.2zM680 383.5v-11.2h1v11.2zM681 383.5v-7.8h1v7.8zM682 383.5v-18.6h1v18.6zM683 383.5v-26.7h1v26.7zM684 383.5v-24.8h1v24.8zM685 383.5v-8.5h1v8.5zM686 383.5v-7.9h1v7.9zM687 383.5v-28.3h1v28.3zM688 383.5v-26.3h1v26.3zM689 383.5v-7.6h1v7.6zM690 383.5v-11.9h1v11.9zM691 383.5v-49.3h1v49.3zM692 383.5v-45.8h1v45.8zM693 383.5v-8.9h1v8.9zM694 383.5v-6.8h1v6.8zM695 383.5v-7.5h1v7.5zM696 383.5v-11.8h1v11.8zM697 383.5v-22.0h1v22.0zM698 383.5v-20.4h1v20.4zM699 383.5v-10.1h1v10.1zM700 383.5v-7.2h1v7.2zM701 383.5v-11.3h1v11.3zM702 383.5v-10.9h1v10.9zM703 383.5v-30.5h1v30.5zM704 383.5v-30.5h1v30.5zM705 383.5v-7.2h1v7.2zM706 383.5v-18.8h1v18.8zM707 383.5v-17.5h1v17.5zM708 383.5v-14.7h1v14.7zM709 383.5v-13.7h1v13.7zM710 383.5v-20.3h1v20.3zM711 383.5v-11.8h1v11.8zM712 383.5v-18.8h1v18.8zM713 383.5v-17.5h1v17.5zM714 383.5v-16.2h1v16.2zM715 383.5v-10.1h1v10.1zM716 383.5v-19.8h1v19.8zM717 383.5v-13.1h1v13.1zM718 383.5v-12.1h1v12.1zM719 383.5v-13.8h1v13.8zM720 383.5v-68.5h1v68.5zM721 383.5v-66.4h1v66.4zM722 383.5v-40.9h1v40.9zM723 383.5v-12.4h1v12.4zM724 383.5v-18.4h1v18.4zM725 383.5v-48.0h1v48.0zM726 383.5v-44.7h1v44.7zM727 383.5v-8.5h1v8.5zM728 383.5v-12.2h1v12.2zM729 383.5v-28.3h1v28.3zM730 383.5v-26.3h1v26.3zM731 383.5v-9.7h1v9.7zM732 383.5v-7.2h1v7.2zM733 383.5v-26.7h1v26.7zM734 383.5v-24.8h1v24.8zM735 383.5v-9.0h1v9.0zM736 383.5v-10.0h1v10.0zM737 383.5v-7.2h1v7.2zM738 383.5v-22.0h1v22.0zM739 383.5v-20.4h1v20.4zM740 383.5v-7.1h1v7.1zM741 383.5v-6.0h1v6.0zM742 383.5v-5.5h1v5.5zM743 383.5v-7.6h1v7.6zM744 383.5v-8.7h1v8.7zM745 383.5v-13.6h1v13.6zM746 383.5v-14.4h1v14.4zM747 383.5v-48.0h1v48.0zM748 383.5v-44.7h1v44.7zM749 383.5v-6.5h1v6.5zM750 383.5v-11.4h1v11.4zM751 383.5v-23.6h1v23.6zM752 383.5v-21.9h1v21.9zM753 383.5v-14.5h1v14.5zM754 383.5v-10.0h1v10.0zM755 383.5v-11.7h1v11.7zM756 383.5v-10.9h1v10.9zM757 383.5v-7.5h1v7.5zM758 383.5v-22.0h1v22.0zM759 383.5v-20.4h1v20.4zM760 383.5v-6.3h1v6.3zM761 383.5v-6.0h1v6.0zM762 383.5v-6.3h1v6.3zM763 383.5v-5.5h1v5.5zM764 383.5v-25.1h1v25.1zM765 383.5v-23.4h1v23.4zM766 383.5v-7.7h1v7.7zM767 383.5v-10.1h1v10.1zM768 383.5v-12.0h1v12.0zM769 383.5v-32.7h1v32.7zM770 383.5v-33.9h1v33.9zM771 383.5v-31.5h1v31.5zM772 383.5v-21.5h1v21.5zM773 383.5v-17.0h1v17.0zM774 383.5v-39.2h1v39.2zM775 383.5v-36.5h1v36.5zM776 383.5v-20.1h1v20.1zM777 383.5v-22.0h1v22.0zM778 383.5v-20.4h1v20.4zM779 383.5v-9.7h1v9.7zM780 383.5v-10.7h1v10.7zM781 383.5v-68.5h1v68.5zM782 383.5v-66.4h1v66.4zM783 383.5v-40.9h1v40.9zM784 383.5v-26.9h1v26.9zM785 383.5v-27.6h1v27.6zM786 383.5v-88.9h1v88.9zM787 383.5v-86.2h1v86.2zM788 383.5v-47.1h1v47.1zM789 383.5v-43.8h1v43.8zM790 383.5v-59.7h1v59.7zM791 383.5v-55.5h1v55.5zM792 383.5v-37.7h1v37.7zM793 383.5v-37.7h1v37.7zM794 383.5v-18.1h1v18.1zM795 383.5v-28.3h1v28.3zM796 383.5v-26.3h1v26.3zM797 383.5v-16.9h1v16.9zM798 383.5v-22.3h1v22.3zM799 383.5v-16.7h1v16.7zM800 383.5v-78.5h1v78.5zM801 383.5v-95.1h1v95.1zM802 383.5v-92.3h1v92.3zM803 383.5v-16.3h1v16.3zM804 383.5v-28.3h1v28.3zM805 383.5v-26.3h1v26.3zM806 383.5v-10.5h1v10.5zM807 383.5v-8.7h1v8.7zM808 383.5v-14.3h1v14.3zM809 383.5v-26.7h1v26.7zM810 383.5v-24.8h1v24.8zM811 383.5v-18.6h1v18.6zM812 383.5v-24.0h1v24.0zM813 383.5v-87.6h1v87.6zM814 383.5v-85.0h1v85.0zM815 383.5v-40.9h1v40.9zM816 383.5v-16.0h1v16.0zM817 383.5v-16.6h1v16.6zM818 383.5v-15.7h1v15.7zM819 383.5v-151.3h1v151.3zM820 383.5v-147.6h1v147.6zM821 383.5v-143.2h1v143.2zM822 383.5v-131.0h1v131.0zM823 383.5v-30.0h1v30.0zM824 383.5v-28.3h1v28.3zM825 383.5v-30.0h1v30.0zM826 383.5v-24.5h1v24.5zM827 383.5v-16.4h1v16.4zM828 383.5v-12.1h1v12.1zM829 383.5v-40.8h1v40.8zM830 383.5v-38.0h1v38.0zM831 383.5v-28.8h1v28.8zM832 383.5v-45.5h1v45.5zM833 383.5v-42.3h1v42.3zM834 383.5v-31.4h1v31.4zM835 383.5v-29.2h1v29.2zM836 383.5v-21.3h1v21.3zM837 383.5v-17.6h1v17.6zM838 383.5v-34.5h1v34.5zM839 383.5v-32.1h1v32.1zM840 383.5v-9.7h1v9.7zM841 383.5v-16.8h1v16.8zM842 383.5v-20.4h1v20.4zM843 383.5v-31.4h1v31.4zM844 383.5v-29.2h1v29.2zM845 383.5v-11.7h1v11.7zM846 383.5v-16.5h1v16.5zM847 383.5v-22.1h1v22.1zM848 383.5v-27.8h1v27.8zM849 383.5v-19.4h1v19.4zM850 383.5v-78.5h1v78.5zM851 383.5v-76.1h1v76.1zM852 383.5v-52.6h1v52.6zM853 383.5v-18.9h1v18.9zM854 383.5v-13.1h1v13.1zM855 383.5v-46.8h1v46.8zM856 383.5v-43.5h1v43.5zM857 383.5v-11.6h1v11.6zM858 383.5v-31.4h1v31.4zM859 383.5v-29.2h1v29.2zM860 383.5v-8.7h1v8.7zM861 383.5v-17.6h1v17.6zM862 383.5v-28.3h1v28.3zM863 383.5v-26.3h1v26.3zM864 383.5v-35.6h1v35.6zM865 383.5v-34.5h1v34.5zM866 383.5v-32.1h1v32.1zM867 383.5v-30.0h1v30.0zM868 383.5v-66.6h1v66.6zM869 383.5v-64.6h1v64.6zM870 383.5v-35.0h1v35.0zM871 383.5v-28.4h1v28.4zM872 383.5v-24.4h1v24.4zM873 383.5v-31.4h1v31.4zM874 383.5v-29.2h1v29.2zM875 383.5v-21.7h1v21.7zM876 383.5v-15.6h1v15.6zM877 383.5v-46.8h1v46.8zM878 383.5v-43.5h1v43.5zM879 383.5v-26.4h1v26.4zM880 383.5v-63.4h1v63.4zM881 383.5v-61.5h1v61.5zM882 383.5v-31.4h1v31.4zM883 383.5v-29.2h1v29.2zM884 383.5v-16.0h1v16.0zM885 383.5v-15.6h1v15.6zM886 383.5v-11.9h1v11.9zM887 383.5v-43.0h1v43.0zM888 383.5v-40.0h1v40.0zM889 383.5v-95.8h1v95.8zM890 383.5v-92.9h1v92.9zM891 383.5v-35.0h1v35.0zM892 383.5v-40.8h1v40.8zM893 383.5v-38.0h1v38.0z" fill="#14c814"/>
<rect x="892" y="195" width="1.4" height="188" fill="#9c10a8"/>
<path d="M289 340L290 340L291 340L292 339L293 339L294 339L295 338L296 338L297 338L298 337L299 337L300 337L301 337L302 336L303 336L304 336L305 335L306 335L307 335L308 335L309 334L310 334L311 334L312 334L313 333L314 333L315 333L316 332L317 332L318 332L319 332L320 331L321 331L322 331L323 331L324 330L325 330L326 330L327 330L328 329L329 329L330 329L331 329L332 328L333 328L334 328L335 328L336 327L337 327L338 327L339 327L340 327L341 326L342 326L343 326L344 326L345 325L346 325L347 325L348 325L349 324L350 324L351 324L352 324L353 324L354 323L355 323L356 323L357 323L358 322L359 322L360 322L361 322L362 322L363 321L364 321L365 321L366 321L367 320L368 320L369 320L370 320L371 320L372 319L373 319L374 319L375 319L376 319L377 318L378 318L379 318L380 318L381 318L382 317L383 317L384 317L385 317L386 317L387 316L388 316L389 316L390 316L391 316L392 315L393 315L394 315L395 315L396 315L397 314L398 314L399 314L400 314L401 314L402 313L403 313L404 313L405 313L406 313L407 312L408 312L409 312L410 312L411 312L412 311L413 311L414 311L415 311L416 311L417 311L418 310L419 310L420 310L421 310L422 310L423 309L424 309L425 309L426 309L427 309L428 309L429 308L430 308L431 308L432 308L433 308L434 307L435 307L436 307L437 307L438 307L439 307L440 306L441 306L442 306L443 306L444 306L445 306L446 305L447 305L448 305L449 305L450 305L451 305L452 304L453 304L454 304L455 304L456 304L457 304L458 303L459 303L460 303L461 303L462 303L463 303L464 302L465 302L466 302L467 302L468 302L469 302L470 301L471 301L472 301L473 301L474 301L475 301L476 300L477 300L478 300L479 300L480 300L481 300L482 299L483 299L484 299L485 299L486 299L487 299L488 298L489 298L490 298L491 298L492 298L493 298L494 298L495 297L496 297L497 297L498 297L499 297L500 297L501 296L502 296L503 296L504 296L505 296L506 296L507 296L508 295L509 295L510 295L511 295L512 295L513 295L514 294L515 294L516 294L517 294L518 294L519 294L520 294L521 293L522 293L523 293L524 293L525 293L526 293L527 293L528 292L529 292L530 292L531 292L532 292L533 292L534 291L535 291L536 291L537 291L538 291L539 291L540 291L541 290L542 290L543 290L544 290L545 290L546 290L547 290L548 289L549 289L550 289L551 289L552 289L553 289L554 289L555 288L556 288L557 288L558 288L559 288L560 288L561 288L562 287L563 287L564 287L565 287L566 287L567 287L568 287L569 286L570 286L571 286L572 286L573 286L574 286L575 286L576 286L577 285L578 285L579 285L580 285L581 285L582 285L583 285L584 284L585 284L586 284L587 284L588 284L589 284L590 284L591 284L592 284L593 284L594 284L595 284L596 284L597 284L598 285L599 285L600 285L601 285L602 285L603 285L604 285L605 286L606 286L607 286L608 286L609 286L610 286L611 286L612 286L613 287L614 287L615 287L616 287L617 287L618 287L619 287L620 288L621 288L622 288L623 288L624 288L625 288L626 288L627 289L628 289L629 289L630 289L631 289L632 289L633 289L634 290L635 290L636 290L637 290L638 290L639 290L640 290L641 291L642 291L643 291L644 291L645 291L646 291L647 292L648 292L649 292L650 292L651 292L652 292L653 292L654 293L655 293L656 293L657 293L658 293L659 293L660 293L661 294L662 294L663 294L664 294L665 294L666 294L667 295L668 295L669 295L670 295L671 295L672 295L673 295L674 296L675 296L676 296L677 296L678 296L679 296L680 297L681 297L682 297L683 297L684 297L685 297L686 297L687 298L688 298L689 298L690 298L691 298L692 298L693 299L694 299L695 299L696 299L697 299L698 299L699 300L700 300L701 300L702 300L703 300L704 300L705 301L706 301L707 301L708 301L709 301L710 301L711 302L712 302L713 302L714 302L715 302L716 302L717 303L718 303L719 303L720 303L721 303L722 303L723 304L724 304L725 304L726 304L727 304L728 304L729 305L730 305L731 305L732 305L733 305L734 305L735 306L736 306L737 306L738 306L739 306L740 306L741 307L742 307L743 307L744 307L745 307L746 308L747 308L748 308L749 308L750 308L751 308L752 309L753 309L754 309L755 309L756 309L757 310L758 310L759 310L760 310L761 310L762 310L763 311L764 311L765 311L766 311L767 311L768 312L769 312L770 312L771 312L772 312L773 313L774 313L775 313L776 313L777 313L778 314L779 314L780 314L781 314L782 314L783 314L784 315L785 315L786 315L787 315L788 315L789 316L790 316L791 316L792 316L793 316L794 317L795 317L796 317L797 317L798 318L799 318L800 318L801 318L802 318L803 319L804 319L805 319L806 319L807 319L808 320L809 320L810 320L811 320L812 320L813 321L814 321L815 321L816 321L817 322L818 322L819 322L820 322L821 322L822 323L823 323L824 323L825 323L826 324L827 324L828 324L829 324L830 324L831 325L832 325L833 325L834 325L835 326L836 326L837 326L838 326L839 327L840 327L841 327L842 327L843 328L844 328L845 328L846 328L847 329L848 329L849 329L850 329L851 330L852 330L853 330L854 330L855 331L856 331L857 331L858 331L859 332L860 332L861 332L862 332L863 333L864 333L865 333L866 333L867 334L868 334L869 334L870 335L871 335L872 335L873 335L874 336L875 336L876 336L877 336L878 337L879 337L880 337L881 338L882 338L883 338L884 339L885 339L886 339L887 339L888 340L889 340L890 340L891 341L892 341L893 341" stroke="#2ce6f6" stroke-width="1.9" fill="none" shape-rendering="geometricPrecision"/>
<rect x="591" y="283" width="1.5" height="30" fill="#9af0e8"/>
<rect x="282" y="352" width="5" height="1" fill="#222"/>
<rect x="282" y="321" width="5" height="1" fill="#222"/>
<rect x="282" y="289" width="5" height="1" fill="#222"/>
<rect x="282" y="258" width="5" height="1" fill="#222"/>
<rect x="282" y="226" width="5" height="1" fill="#222"/>
<rect x="282" y="195" width="5" height="1" fill="#222"/>
<rect x="940" y="360" width="4" height="1" fill="#222"/>
<rect x="940" y="336" width="4" height="1" fill="#222"/>
<rect x="940" y="313" width="4" height="1" fill="#222"/>
<rect x="940" y="289" width="4" height="1" fill="#222"/>
<rect x="940" y="266" width="4" height="1" fill="#222"/>
<rect x="940" y="242" width="4" height="1" fill="#222"/>
<rect x="940" y="219" width="4" height="1" fill="#222"/>
<rect x="940" y="195" width="4" height="1" fill="#222"/>
<rect x="290" y="178" width="9" height="12" fill="#008000"/>
<rect x="338" y="178" width="9.5" height="12" fill="#00ffff"/>
<rect x="444" y="178" width="8.5" height="12" fill="#808080"/>
<g font-size="15.7px" fill="#1a1a1a" shape-rendering="geometricPrecision"><text x="281.5" y="357.7" text-anchor="end">100</text><text x="281.5" y="326.3" text-anchor="end">200</text><text x="281.5" y="294.9" text-anchor="end">300</text><text x="281.5" y="263.5" text-anchor="end">400</text><text x="281.5" y="232.1" text-anchor="end">500</text><text x="281.5" y="200.7" text-anchor="end">600</text><text x="943.5" y="365.5">1 X</text><text x="943.5" y="342.0">2 X</text><text x="943.5" y="318.4">3 X</text><text x="943.5" y="294.9">4 X</text><text x="943.5" y="271.3">5 X</text><text x="943.5" y="247.7">6 X</text><text x="943.5" y="224.2">7 X</text><text x="943.5" y="200.6">8 X</text><text x="287.4" y="397.8" text-anchor="middle">0.0</text><text x="352.2" y="397.8" text-anchor="middle">5.0</text><text x="417.1" y="397.8" text-anchor="middle">10.0</text><text x="481.9" y="397.8" text-anchor="middle">15.0</text><text x="546.8" y="397.8" text-anchor="middle">20.0</text><text x="611.6" y="397.8" text-anchor="middle">25.0</text><text x="676.5" y="397.8" text-anchor="middle">30.0</text><text x="741.4" y="397.8" text-anchor="middle">35.0</text><text x="806.2" y="397.8" text-anchor="middle">40.0</text><text x="871.0" y="397.8" text-anchor="middle">45.0</text><text x="965" y="397.8" text-anchor="end">50.0 GB</text><text x="303.6" y="190.1" textLength="30.5" lengthAdjust="spacingAndGlyphs">LDC</text><text x="351.6" y="190.1" textLength="87.5" lengthAdjust="spacingAndGlyphs">Read speed</text><text x="456.8" y="190.1" textLength="87.5" lengthAdjust="spacingAndGlyphs">Write speed</text></g>
</svg>
<svg class="abs" style="left:240px;top:407px" width="750" height="240" viewBox="240 407 750 240" shape-rendering="crispEdges" font-family="Liberation Sans, sans-serif">
<defs><linearGradient id="bgbis" x1="0" y1="0" x2="0" y2="1"><stop offset="0" stop-color="#03034c"/><stop offset="0.5" stop-color="#03036e"/><stop offset="1" stop-color="#020298"/></linearGradient></defs>
<rect x="287" y="427" width="653" height="191" fill="#06060c"/>
<rect x="289" y="429" width="650" height="188" fill="url(#bgbis)"/>
<path d="M301 429v188 M314 429v188 M327 429v188 M340 429v188 M353 429v188 M366 429v188 M379 429v188 M392 429v188 M405 429v188 M418 429v188 M431 429v188 M444 429v188 M457 429v188 M470 429v188 M483 429v188 M496 429v188 M509 429v188 M522 429v188 M535 429v188 M548 429v188 M561 429v188 M574 429v188 M587 429v188 M600 429v188 M613 429v188 M626 429v188 M639 429v188 M652 429v188 M665 429v188 M678 429v188 M690 429v188 M703 429v188 M716 429v188 M729 429v188 M742 429v188 M755 429v188 M768 429v188 M781 429v188 M794 429v188 M807 429v188 M820 429v188 M833 429v188 M846 429v188 M859 429v188 M872 429v188 M885 429v188 M898 429v188 M911 429v188 M924 429v188 M289 570h650 M289 524h650 M289 476h650 M289 430h650" stroke="#1a1a24" stroke-width="1.6" fill="none" transform="translate(0.5,0.5)"/>
<path d="M289 617.5v-18.8h1v18.8zM290 617.5v-18.8h1v18.8zM291 617.5v-18.8h1v18.8zM292 617.5v-18.8h1v18.8zM293 617.5v-18.8h1v18.8zM294 617.5v-18.8h1v18.8zM295 617.5v-9.4h1v9.4zM296 617.5v-37.6h1v37.6zM297 617.5v-37.6h1v37.6zM298 617.5v-18.8h1v18.8zM299 617.5v-18.8h1v18.8zM300 617.5v-18.8h1v18.8zM301 617.5v-18.8h1v18.8zM302 617.5v-18.8h1v18.8zM303 617.5v-9.4h1v9.4zM304 617.5v-47.0h1v47.0zM305 617.5v-47.0h1v47.0zM306 617.5v-18.8h1v18.8zM307 617.5v-18.8h1v18.8zM308 617.5v-18.8h1v18.8zM309 617.5v-28.2h1v28.2zM310 617.5v-28.2h1v28.2zM311 617.5v-28.2h1v28.2zM312 617.5v-28.2h1v28.2zM313 617.5v-28.2h1v28.2zM314 617.5v-9.4h1v9.4zM315 617.5v-9.4h1v9.4zM316 617.5v-9.4h1v9.4zM317 617.5v-18.8h1v18.8zM318 617.5v-18.8h1v18.8zM319 617.5v-28.2h1v28.2zM320 617.5v-28.2h1v28.2zM321 617.5v-18.8h1v18.8zM322 617.5v-37.6h1v37.6zM323 617.5v-37.6h1v37.6zM324 617.5v-18.8h1v18.8zM325 617.5v-18.8h1v18.8zM326 617.5v-18.8h1v18.8zM327 617.5v-18.8h1v18.8zM328 617.5v-18.8h1v18.8zM329 617.5v-28.2h1v28.2zM330 617.5v-28.2h1v28.2zM331 617.5v-18.8h1v18.8zM332 617.5v-18.8h1v18.8zM333 617.5v-37.6h1v37.6zM334 617.5v-37.6h1v37.6zM335 617.5v-37.6h1v37.6zM336 617.5v-37.6h1v37.6zM337 617.5v-18.8h1v18.8zM338 617.5v-28.2h1v28.2zM339 617.5v-28.2h1v28.2zM340 617.5v-37.6h1v37.6zM341 617.5v-37.6h1v37.6zM342 617.5v-18.8h1v18.8zM343 617.5v-18.8h1v18.8zM344 617.5v-9.4h1v9.4zM345 617.5v-9.4h1v9.4zM346 617.5v-18.8h1v18.8zM347 617.5v-18.8h1v18.8zM348 617.5v-18.8h1v18.8zM349 617.5v-18.8h1v18.8zM350 617.5v-18.8h1v18.8zM351 617.5v-18.8h1v18.8zM352 617.5v-18.8h1v18.8zM353 617.5v-9.4h1v9.4zM354 617.5v-9.4h1v9.4zM355 617.5v-18.8h1v18.8zM356 617.5v-18.8h1v18.8zM357 617.5v-18.8h1v18.8zM358 617.5v-18.8h1v18.8zM359 617.5v-18.8h1v18.8zM360 617.5v-18.8h1v18.8zM361 617.5v-84.6h1v84.6zM362 617.5v-84.6h1v84.6zM363 617.5v-18.8h1v18.8zM364 617.5v-18.8h1v18.8zM365 617.5v-18.8h1v18.8zM366 617.5v-18.8h1v18.8zM367 617.5v-18.8h1v18.8zM368 617.5v-9.4h1v9.4zM369 617.5v-75.2h1v75.2zM370 617.5v-75.2h1v75.2zM371 617.5v-18.8h1v18.8zM372 617.5v-18.8h1v18.8zM373 617.5v-47.0h1v47.0zM374 617.5v-47.0h1v47.0zM375 617.5v-18.8h1v18.8zM376 617.5v-18.8h1v18.8zM377 617.5v-18.8h1v18.8zM378 617.5v-18.8h1v18.8zM379 617.5v-18.8h1v18.8zM380 617.5v-65.8h1v65.8zM381 617.5v-65.8h1v65.8zM382 617.5v-18.8h1v18.8zM383 617.5v-18.8h1v18.8zM384 617.5v-18.8h1v18.8zM385 617.5v-28.2h1v28.2zM386 617.5v-28.2h1v28.2zM387 617.5v-18.8h1v18.8zM388 617.5v-18.8h1v18.8zM389 617.5v-37.6h1v37.6zM390 617.5v-37.6h1v37.6zM391 617.5v-18.8h1v18.8zM392 617.5v-18.8h1v18.8zM393 617.5v-37.6h1v37.6zM394 617.5v-37.6h1v37.6zM395 617.5v-18.8h1v18.8zM396 617.5v-18.8h1v18.8zM397 617.5v-18.8h1v18.8zM398 617.5v-18.8h1v18.8zM399 617.5v-18.8h1v18.8zM400 617.5v-37.6h1v37.6zM401 617.5v-37.6h1v37.6zM402 617.5v-18.8h1v18.8zM403 617.5v-9.4h1v9.4zM404 617.5v-9.4h1v9.4zM405 617.5v-9.4h1v9.4zM406 617.5v-18.8h1v18.8zM407 617.5v-18.8h1v18.8zM408 617.5v-18.8h1v18.8zM409 617.5v-18.8h1v18.8zM410 617.5v-18.8h1v18.8zM411 617.5v-9.4h1v9.4zM412 617.5v-9.4h1v9.4zM413 617.5v-18.8h1v18.8zM414 617.5v-18.8h1v18.8zM415 617.5v-18.8h1v18.8zM416 617.5v-18.8h1v18.8zM417 617.5v-18.8h1v18.8zM418 617.5v-18.8h1v18.8zM419 617.5v-18.8h1v18.8zM420 617.5v-18.8h1v18.8zM421 617.5v-9.4h1v9.4zM422 617.5v-9.4h1v9.4zM423 617.5v-9.4h1v9.4zM424 617.5v-18.8h1v18.8zM425 617.5v-18.8h1v18.8zM426 617.5v-18.8h1v18.8zM427 617.5v-18.8h1v18.8zM428 617.5v-18.8h1v18.8zM429 617.5v-28.2h1v28.2zM430 617.5v-28.2h1v28.2zM431 617.5v-18.8h1v18.8zM432 617.5v-18.8h1v18.8zM433 617.5v-18.8h1v18.8zM434 617.5v-18.8h1v18.8zM435 617.5v-18.8h1v18.8zM436 617.5v-18.8h1v18.8zM437 617.5v-18.8h1v18.8zM438 617.5v-18.8h1v18.8zM439 617.5v-18.8h1v18.8zM440 617.5v-9.4h1v9.4zM441 617.5v-9.4h1v9.4zM442 617.5v-18.8h1v18.8zM443 617.5v-18.8h1v18.8zM444 617.5v-18.8h1v18.8zM445 617.5v-18.8h1v18.8zM446 617.5v-18.8h1v18.8zM447 617.5v-9.4h1v9.4zM448 617.5v-9.4h1v9.4zM449 617.5v-18.8h1v18.8zM450 617.5v-18.8h1v18.8zM451 617.5v-9.4h1v9.4zM452 617.5v-9.4h1v9.4zM453 617.5v-18.8h1v18.8zM454 617.5v-18.8h1v18.8zM455 617.5v-18.8h1v18.8zM456 617.5v-18.8h1v18.8zM457 617.5v-18.8h1v18.8zM458 617.5v-18.8h1v18.8zM459 617.5v-28.2h1v28.2zM460 617.5v-47.0h1v47.0zM461 617.5v-47.0h1v47.0zM462 617.5v-28.2h1v28.2zM463 617.5v-28.2h1v28.2zM464 617.5v-28.2h1v28.2zM465 617.5v-28.2h1v28.2zM466 617.5v-28.2h1v28.2zM467 617.5v-28.2h1v28.2zM468 617.5v-28.2h1v28.2zM469 617.5v-28.2h1v28.2zM470 617.5v-28.2h1v28.2zM471 617.5v-28.2h1v28.2zM472 617.5v-28.2h1v28.2zM473 617.5v-28.2h1v28.2zM474 617.5v-28.2h1v28.2zM475 617.5v-28.2h1v28.2zM476 617.5v-28.2h1v28.2zM477 617.5v-18.8h1v18.8zM478 617.5v-18.8h1v18.8zM479 617.5v-18.8h1v18.8zM480 617.5v-18.8h1v18.8zM481 617.5v-28.2h1v28.2zM482 617.5v-28.2h1v28.2zM483 617.5v-28.2h1v28.2zM484 617.5v-18.8h1v18.8zM485 617.5v-18.8h1v18.8zM486 617.5v-18.8h1v18.8zM487 617.5v-18.8h1v18.8zM488 617.5v-18.8h1v18.8zM489 617.5v-18.8h1v18.8zM490 617.5v-18.8h1v18.8zM491 617.5v-18.8h1v18.8zM492 617.5v-18.8h1v18.8zM493 617.5v-28.2h1v28.2zM494 617.5v-28.2h1v28.2zM495 617.5v-18.8h1v18.8zM496 617.5v-18.8h1v18.8zM497 617.5v-28.2h1v28.2zM498 617.5v-28.2h1v28.2zM499 617.5v-28.2h1v28.2zM500 617.5v-18.8h1v18.8zM501 617.5v-37.6h1v37.6zM502 617.5v-37.6h1v37.6zM503 617.5v-28.2h1v28.2zM504 617.5v-28.2h1v28.2zM505 617.5v-28.2h1v28.2zM506 617.5v-28.2h1v28.2zM507 617.5v-28.2h1v28.2zM508 617.5v-18.8h1v18.8zM509 617.5v-18.8h1v18.8zM510 617.5v-37.6h1v37.6zM511 617.5v-37.6h1v37.6zM512 617.5v-18.8h1v18.8zM513 617.5v-18.8h1v18.8zM514 617.5v-18.8h1v18.8zM515 617.5v-28.2h1v28.2zM516 617.5v-28.2h1v28.2zM517 617.5v-18.8h1v18.8zM518 617.5v-18.8h1v18.8zM519 617.5v-18.8h1v18.8zM520 617.5v-18.8h1v18.8zM521 617.5v-28.2h1v28.2zM522 617.5v-28.2h1v28.2zM523 617.5v-28.2h1v28.2zM524 617.5v-28.2h1v28.2zM525 617.5v-18.8h1v18.8zM526 617.5v-18.8h1v18.8zM527 617.5v-37.6h1v37.6zM528 617.5v-37.6h1v37.6zM529 617.5v-37.6h1v37.6zM530 617.5v-37.6h1v37.6zM531 617.5v-18.8h1v18.8zM532 617.5v-18.8h1v18.8zM533 617.5v-18.8h1v18.8zM534 617.5v-18.8h1v18.8zM535 617.5v-56.4h1v56.4zM536 617.5v-56.4h1v56.4zM537 617.5v-28.2h1v28.2zM538 617.5v-28.2h1v28.2zM539 617.5v-28.2h1v28.2zM540 617.5v-28.2h1v28.2zM541 617.5v-28.2h1v28.2zM542 617.5v-28.2h1v28.2zM543 617.5v-28.2h1v28.2zM544 617.5v-28.2h1v28.2zM545 617.5v-37.6h1v37.6zM546 617.5v-37.6h1v37.6zM547 617.5v-28.2h1v28.2zM548 617.5v-47.0h1v47.0zM549 617.5v-47.0h1v47.0zM550 617.5v-28.2h1v28.2zM551 617.5v-47.0h1v47.0zM552 617.5v-47.0h1v47.0zM553 617.5v-18.8h1v18.8zM554 617.5v-18.8h1v18.8zM555 617.5v-28.2h1v28.2zM556 617.5v-28.2h1v28.2zM557 617.5v-28.2h1v28.2zM558 617.5v-28.2h1v28.2zM559 617.5v-47.0h1v47.0zM560 617.5v-47.0h1v47.0zM561 617.5v-28.2h1v28.2zM562 617.5v-28.2h1v28.2zM563 617.5v-28.2h1v28.2zM564 617.5v-47.0h1v47.0zM565 617.5v-47.0h1v47.0zM566 617.5v-28.2h1v28.2zM567 617.5v-28.2h1v28.2zM568 617.5v-37.6h1v37.6zM569 617.5v-37.6h1v37.6zM570 617.5v-18.8h1v18.8zM571 617.5v-18.8h1v18.8zM572 617.5v-18.8h1v18.8zM573 617.5v-18.8h1v18.8zM574 617.5v-18.8h1v18.8zM575 617.5v-28.2h1v28.2zM576 617.5v-28.2h1v28.2zM577 617.5v-28.2h1v28.2zM578 617.5v-47.0h1v47.0zM579 617.5v-56.4h1v56.4zM580 617.5v-56.4h1v56.4zM581 617.5v-28.2h1v28.2zM582 617.5v-28.2h1v28.2zM583 617.5v-28.2h1v28.2zM584 617.5v-28.2h1v28.2zM585 617.5v-18.8h1v18.8zM586 617.5v-18.8h1v18.8zM587 617.5v-84.6h1v84.6zM588 617.5v-84.6h1v84.6zM589 617.5v-84.6h1v84.6zM590 617.5v-84.6h1v84.6zM591 617.5v-122.2h1v122.2zM592 617.5v-94.0h1v94.0zM593 617.5v-84.6h1v84.6zM594 617.5v-84.6h1v84.6zM595 617.5v-84.6h1v84.6zM596 617.5v-84.6h1v84.6zM597 617.5v-84.6h1v84.6zM598 617.5v-84.6h1v84.6zM599 617.5v-84.6h1v84.6zM600 617.5v-84.6h1v84.6zM601 617.5v-75.2h1v75.2zM602 617.5v-75.2h1v75.2zM603 617.5v-75.2h1v75.2zM604 617.5v-75.2h1v75.2zM605 617.5v-65.8h1v65.8zM606 617.5v-65.8h1v65.8zM607 617.5v-75.2h1v75.2zM608 617.5v-75.2h1v75.2zM609 617.5v-56.4h1v56.4zM610 617.5v-56.4h1v56.4zM611 617.5v-65.8h1v65.8zM612 617.5v-65.8h1v65.8zM613 617.5v-65.8h1v65.8zM614 617.5v-47.0h1v47.0zM615 617.5v-56.4h1v56.4zM616 617.5v-56.4h1v56.4zM617 617.5v-56.4h1v56.4zM618 617.5v-47.0h1v47.0zM619 617.5v-47.0h1v47.0zM620 617.5v-28.2h1v28.2zM621 617.5v-28.2h1v28.2zM622 617.5v-28.2h1v28.2zM623 617.5v-28.2h1v28.2zM624 617.5v-28.2h1v28.2zM625 617.5v-28.2h1v28.2zM626 617.5v-28.2h1v28.2zM627 617.5v-28.2h1v28.2zM628 617.5v-37.6h1v37.6zM629 617.5v-47.0h1v47.0zM630 617.5v-47.0h1v47.0zM631 617.5v-18.8h1v18.8zM632 617.5v-18.8h1v18.8zM633 617.5v-28.2h1v28.2zM634 617.5v-28.2h1v28.2zM635 617.5v-18.8h1v18.8zM636 617.5v-18.8h1v18.8zM637 617.5v-47.0h1v47.0zM638 617.5v-47.0h1v47.0zM639 617.5v-18.8h1v18.8zM640 617.5v-18.8h1v18.8zM641 617.5v-18.8h1v18.8zM642 617.5v-18.8h1v18.8zM643 617.5v-9.4h1v9.4zM644 617.5v-9.4h1v9.4zM645 617.5v-18.8h1v18.8zM646 617.5v-18.8h1v18.8zM647 617.5v-18.8h1v18.8zM648 617.5v-18.8h1v18.8zM649 617.5v-18.8h1v18.8zM650 617.5v-9.4h1v9.4zM651 617.5v-9.4h1v9.4zM652 617.5v-28.2h1v28.2zM653 617.5v-28.2h1v28.2zM654 617.5v-18.8h1v18.8zM655 617.5v-18.8h1v18.8zM656 617.5v-37.6h1v37.6zM657 617.5v-37.6h1v37.6zM658 617.5v-18.8h1v18.8zM659 617.5v-18.8h1v18.8zM660 617.5v-18.8h1v18.8zM661 617.5v-18.8h1v18.8zM662 617.5v-18.8h1v18.8zM663 617.5v-18.8h1v18.8zM664 617.5v-9.4h1v9.4zM665 617.5v-9.4h1v9.4zM666 617.5v-65.8h1v65.8zM667 617.5v-65.8h1v65.8zM668 617.5v-18.8h1v18.8zM669 617.5v-18.8h1v18.8zM670 617.5v-18.8h1v18.8zM671 617.5v-18.8h1v18.8zM672 617.5v-9.4h1v9.4zM673 617.5v-9.4h1v9.4zM674 617.5v-9.4h1v9.4zM675 617.5v-18.8h1v18.8zM676 617.5v-18.8h1v18.8zM677 617.5v-9.4h1v9.4zM678 617.5v-37.6h1v37.6zM679 617.5v-37.6h1v37.6zM680 617.5v-9.4h1v9.4zM681 617.5v-18.8h1v18.8zM682 617.5v-18.8h1v18.8zM683 617.5v-28.2h1v28.2zM684 617.5v-28.2h1v28.2zM685 617.5v-18.8h1v18.8zM686 617.5v-18.8h1v18.8zM687 617.5v-37.6h1v37.6zM688 617.5v-37.6h1v37.6zM689 617.5v-28.2h1v28.2zM690 617.5v-28.2h1v28.2zM691 617.5v-18.8h1v18.8zM692 617.5v-18.8h1v18.8zM693 617.5v-18.8h1v18.8zM694 617.5v-18.8h1v18.8zM695 617.5v-18.8h1v18.8zM696 617.5v-18.8h1v18.8zM697 617.5v-18.8h1v18.8zM698 617.5v-18.8h1v18.8zM699 617.5v-18.8h1v18.8zM700 617.5v-18.8h1v18.8zM701 617.5v-18.8h1v18.8zM702 617.5v-28.2h1v28.2zM703 617.5v-28.2h1v28.2zM704 617.5v-28.2h1v28.2zM705 617.5v-28.2h1v28.2zM706 617.5v-18.8h1v18.8zM707 617.5v-18.8h1v18.8zM708 617.5v-18.8h1v18.8zM709 617.5v-18.8h1v18.8zM710 617.5v-18.8h1v18.8zM711 617.5v-18.8h1v18.8zM712 617.5v-28.2h1v28.2zM713 617.5v-28.2h1v28.2zM714 617.5v-28.2h1v28.2zM715 617.5v-18.8h1v18.8zM716 617.5v-18.8h1v18.8zM717 617.5v-18.8h1v18.8zM718 617.5v-18.8h1v18.8zM719 617.5v-9.4h1v9.4zM720 617.5v-56.4h1v56.4zM721 617.5v-56.4h1v56.4zM722 617.5v-18.8h1v18.8zM723 617.5v-28.2h1v28.2zM724 617.5v-28.2h1v28.2zM725 617.5v-47.0h1v47.0zM726 617.5v-47.0h1v47.0zM727 617.5v-18.8h1v18.8zM728 617.5v-18.8h1v18.8zM729 617.5v-9.4h1v9.4zM730 617.5v-9.4h1v9.4zM731 617.5v-18.8h1v18.8zM732 617.5v-18.8h1v18.8zM733 617.5v-9.4h1v9.4zM734 617.5v-9.4h1v9.4zM735 617.5v-9.4h1v9.4zM736 617.5v-18.8h1v18.8zM737 617.5v-18.8h1v18.8zM738 617.5v-18.8h1v18.8zM739 617.5v-18.8h1v18.8zM740 617.5v-18.8h1v18.8zM741 617.5v-18.8h1v18.8zM742 617.5v-18.8h1v18.8zM743 617.5v-18.8h1v18.8zM744 617.5v-18.8h1v18.8zM745 617.5v-18.8h1v18.8zM746 617.5v-18.8h1v18.8zM747 617.5v-18.8h1v18.8zM748 617.5v-18.8h1v18.8zM749 617.5v-18.8h1v18.8zM750 617.5v-37.6h1v37.6zM751 617.5v-37.6h1v37.6zM752 617.5v-37.6h1v37.6zM753 617.5v-28.2h1v28.2zM754 617.5v-28.2h1v28.2zM755 617.5v-18.8h1v18.8zM756 617.5v-18.8h1v18.8zM757 617.5v-9.4h1v9.4zM758 617.5v-9.4h1v9.4zM759 617.5v-9.4h1v9.4zM760 617.5v-18.8h1v18.8zM761 617.5v-18.8h1v18.8zM762 617.5v-18.8h1v18.8zM763 617.5v-18.8h1v18.8zM764 617.5v-18.8h1v18.8zM765 617.5v-18.8h1v18.8zM766 617.5v-18.8h1v18.8zM767 617.5v-18.8h1v18.8zM768 617.5v-18.8h1v18.8zM769 617.5v-9.4h1v9.4zM770 617.5v-37.6h1v37.6zM771 617.5v-37.6h1v37.6zM772 617.5v-9.4h1v9.4zM773 617.5v-9.4h1v9.4zM774 617.5v-37.6h1v37.6zM775 617.5v-37.6h1v37.6zM776 617.5v-18.8h1v18.8zM777 617.5v-18.8h1v18.8zM778 617.5v-18.8h1v18.8zM779 617.5v-18.8h1v18.8zM780 617.5v-18.8h1v18.8zM781 617.5v-47.0h1v47.0zM782 617.5v-47.0h1v47.0zM783 617.5v-9.4h1v9.4zM784 617.5v-28.2h1v28.2zM785 617.5v-28.2h1v28.2zM786 617.5v-56.4h1v56.4zM787 617.5v-56.4h1v56.4zM788 617.5v-37.6h1v37.6zM789 617.5v-37.6h1v37.6zM790 617.5v-37.6h1v37.6zM791 617.5v-37.6h1v37.6zM792 617.5v-9.4h1v9.4zM793 617.5v-18.8h1v18.8zM794 617.5v-18.8h1v18.8zM795 617.5v-37.6h1v37.6zM796 617.5v-37.6h1v37.6zM797 617.5v-18.8h1v18.8zM798 617.5v-18.8h1v18.8zM799 617.5v-18.8h1v18.8zM800 617.5v-56.4h1v56.4zM801 617.5v-56.4h1v56.4zM802 617.5v-9.4h1v9.4zM803 617.5v-9.4h1v9.4zM804 617.5v-9.4h1v9.4zM805 617.5v-18.8h1v18.8zM806 617.5v-18.8h1v18.8zM807 617.5v-9.4h1v9.4zM808 617.5v-9.4h1v9.4zM809 617.5v-37.6h1v37.6zM810 617.5v-37.6h1v37.6zM811 617.5v-28.2h1v28.2zM812 617.5v-28.2h1v28.2zM813 617.5v-75.2h1v75.2zM814 617.5v-75.2h1v75.2zM815 617.5v-18.8h1v18.8zM816 617.5v-18.8h1v18.8zM817 617.5v-18.8h1v18.8zM818 617.5v-9.4h1v9.4zM819 617.5v-94.0h1v94.0zM820 617.5v-94.0h1v94.0zM821 617.5v-28.2h1v28.2zM822 617.5v-18.8h1v18.8zM823 617.5v-18.8h1v18.8zM824 617.5v-9.4h1v9.4zM825 617.5v-9.4h1v9.4zM826 617.5v-18.8h1v18.8zM827 617.5v-18.8h1v18.8zM828 617.5v-18.8h1v18.8zM829 617.5v-37.6h1v37.6zM830 617.5v-37.6h1v37.6zM831 617.5v-18.8h1v18.8zM832 617.5v-37.6h1v37.6zM833 617.5v-37.6h1v37.6zM834 617.5v-9.4h1v9.4zM835 617.5v-9.4h1v9.4zM836 617.5v-9.4h1v9.4zM837 617.5v-9.4h1v9.4zM838 617.5v-9.4h1v9.4zM839 617.5v-28.2h1v28.2zM840 617.5v-28.2h1v28.2zM841 617.5v-18.8h1v18.8zM842 617.5v-18.8h1v18.8zM843 617.5v-18.8h1v18.8zM844 617.5v-18.8h1v18.8zM845 617.5v-18.8h1v18.8zM846 617.5v-9.4h1v9.4zM847 617.5v-9.4h1v9.4zM848 617.5v-18.8h1v18.8zM849 617.5v-18.8h1v18.8zM850 617.5v-47.0h1v47.0zM851 617.5v-47.0h1v47.0zM852 617.5v-9.4h1v9.4zM853 617.5v-18.8h1v18.8zM854 617.5v-18.8h1v18.8zM855 617.5v-37.6h1v37.6zM856 617.5v-37.6h1v37.6zM857 617.5v-28.2h1v28.2zM858 617.5v-28.2h1v28.2zM859 617.5v-9.4h1v9.4zM860 617.5v-9.4h1v9.4zM861 617.5v-9.4h1v9.4zM862 617.5v-9.4h1v9.4zM863 617.5v-9.4h1v9.4zM864 617.5v-9.4h1v9.4zM865 617.5v-18.8h1v18.8zM866 617.5v-18.8h1v18.8zM867 617.5v-18.8h1v18.8zM868 617.5v-47.0h1v47.0zM869 617.5v-47.0h1v47.0zM870 617.5v-9.4h1v9.4zM871 617.5v-9.4h1v9.4zM872 617.5v-18.8h1v18.8zM873 617.5v-18.8h1v18.8zM874 617.5v-18.8h1v18.8zM875 617.5v-18.8h1v18.8zM876 617.5v-18.8h1v18.8zM877 617.5v-37.6h1v37.6zM878 617.5v-37.6h1v37.6zM879 617.5v-28.2h1v28.2zM880 617.5v-37.6h1v37.6zM881 617.5v-37.6h1v37.6zM882 617.5v-9.4h1v9.4zM883 617.5v-9.4h1v9.4zM884 617.5v-18.8h1v18.8zM885 617.5v-18.8h1v18.8zM886 617.5v-18.8h1v18.8zM887 617.5v-18.8h1v18.8zM888 617.5v-18.8h1v18.8zM889 617.5v-56.4h1v56.4zM890 617.5v-56.4h1v56.4zM891 617.5v-18.8h1v18.8zM892 617.5v-37.6h1v37.6zM893 617.5v-37.6h1v37.6z" fill="#1ec81e"/>
<path d="M587 617.5v-84.6h1v84.6zM588 617.5v-84.6h1v84.6zM589 617.5v-84.6h1v84.6zM590 617.5v-84.6h1v84.6zM591 617.5v-122.2h1v122.2zM592 617.5v-94.0h1v94.0zM593 617.5v-84.6h1v84.6zM594 617.5v-84.6h1v84.6zM595 617.5v-84.6h1v84.6zM596 617.5v-84.6h1v84.6zM597 617.5v-84.6h1v84.6zM598 617.5v-84.6h1v84.6zM599 617.5v-84.6h1v84.6z" fill="#7acc28"/>
<path d="M296 598.7v-18.8h1v18.8zM297 598.7v-18.8h1v18.8zM304 598.7v-28.2h1v28.2zM305 598.7v-28.2h1v28.2zM319 598.7v-9.4h1v9.4zM320 598.7v-9.4h1v9.4zM322 598.7v-18.8h1v18.8zM323 598.7v-18.8h1v18.8zM329 598.7v-9.4h1v9.4zM330 598.7v-9.4h1v9.4zM340 589.3v-9.4h1v9.4zM341 589.3v-9.4h1v9.4zM361 598.7v-65.8h1v65.8zM362 598.7v-65.8h1v65.8zM369 598.7v-56.4h1v56.4zM370 598.7v-56.4h1v56.4zM373 598.7v-28.2h1v28.2zM374 598.7v-28.2h1v28.2zM380 598.7v-47.0h1v47.0zM381 598.7v-47.0h1v47.0zM385 598.7v-9.4h1v9.4zM386 598.7v-9.4h1v9.4zM389 598.7v-18.8h1v18.8zM390 598.7v-18.8h1v18.8zM393 598.7v-18.8h1v18.8zM394 598.7v-18.8h1v18.8zM400 598.7v-18.8h1v18.8zM401 598.7v-18.8h1v18.8zM429 598.7v-9.4h1v9.4zM430 598.7v-9.4h1v9.4zM460 589.3v-18.8h1v18.8zM461 589.3v-18.8h1v18.8zM481 598.7v-9.4h1v9.4zM482 598.7v-9.4h1v9.4zM483 598.7v-9.4h1v9.4zM493 598.7v-9.4h1v9.4zM494 598.7v-9.4h1v9.4zM497 598.7v-9.4h1v9.4zM498 598.7v-9.4h1v9.4zM499 598.7v-9.4h1v9.4zM501 589.3v-9.4h1v9.4zM502 589.3v-9.4h1v9.4zM510 598.7v-18.8h1v18.8zM511 598.7v-18.8h1v18.8zM515 598.7v-9.4h1v9.4zM516 598.7v-9.4h1v9.4zM535 589.3v-28.2h1v28.2zM536 589.3v-28.2h1v28.2zM545 589.3v-9.4h1v9.4zM546 589.3v-9.4h1v9.4zM548 589.3v-18.8h1v18.8zM549 589.3v-18.8h1v18.8zM551 589.3v-18.8h1v18.8zM552 589.3v-18.8h1v18.8zM559 589.3v-18.8h1v18.8zM560 589.3v-18.8h1v18.8zM564 589.3v-18.8h1v18.8zM565 589.3v-18.8h1v18.8zM568 589.3v-9.4h1v9.4zM569 589.3v-9.4h1v9.4zM579 570.5v-9.4h1v9.4zM580 570.5v-9.4h1v9.4zM607 551.7v-9.4h1v9.4zM608 551.7v-9.4h1v9.4zM611 561.1v-9.4h1v9.4zM612 561.1v-9.4h1v9.4zM613 561.1v-9.4h1v9.4zM615 570.5v-9.4h1v9.4zM616 570.5v-9.4h1v9.4zM617 570.5v-9.4h1v9.4zM629 579.9v-9.4h1v9.4zM630 579.9v-9.4h1v9.4zM633 598.7v-9.4h1v9.4zM634 598.7v-9.4h1v9.4zM637 598.7v-28.2h1v28.2zM638 598.7v-28.2h1v28.2zM652 598.7v-9.4h1v9.4zM653 598.7v-9.4h1v9.4zM656 598.7v-18.8h1v18.8zM657 598.7v-18.8h1v18.8zM666 598.7v-47.0h1v47.0zM667 598.7v-47.0h1v47.0zM678 608.1v-28.2h1v28.2zM679 608.1v-28.2h1v28.2zM683 598.7v-9.4h1v9.4zM684 598.7v-9.4h1v9.4zM687 589.3v-9.4h1v9.4zM688 589.3v-9.4h1v9.4zM712 598.7v-9.4h1v9.4zM713 598.7v-9.4h1v9.4zM714 598.7v-9.4h1v9.4zM720 598.7v-37.6h1v37.6zM721 598.7v-37.6h1v37.6zM725 589.3v-18.8h1v18.8zM726 589.3v-18.8h1v18.8zM750 589.3v-9.4h1v9.4zM751 589.3v-9.4h1v9.4zM752 589.3v-9.4h1v9.4zM770 608.1v-28.2h1v28.2zM771 608.1v-28.2h1v28.2zM774 598.7v-18.8h1v18.8zM775 598.7v-18.8h1v18.8zM781 598.7v-28.2h1v28.2zM782 598.7v-28.2h1v28.2zM786 579.9v-18.8h1v18.8zM787 579.9v-18.8h1v18.8zM795 598.7v-18.8h1v18.8zM796 598.7v-18.8h1v18.8zM800 598.7v-37.6h1v37.6zM801 598.7v-37.6h1v37.6zM809 589.3v-9.4h1v9.4zM810 589.3v-9.4h1v9.4zM813 589.3v-47.0h1v47.0zM814 589.3v-47.0h1v47.0zM819 589.3v-65.8h1v65.8zM820 589.3v-65.8h1v65.8zM829 598.7v-18.8h1v18.8zM830 598.7v-18.8h1v18.8zM832 598.7v-18.8h1v18.8zM833 598.7v-18.8h1v18.8zM839 598.7v-9.4h1v9.4zM840 598.7v-9.4h1v9.4zM850 598.7v-28.2h1v28.2zM851 598.7v-28.2h1v28.2zM855 589.3v-9.4h1v9.4zM856 589.3v-9.4h1v9.4zM868 598.7v-28.2h1v28.2zM869 598.7v-28.2h1v28.2zM877 589.3v-9.4h1v9.4zM878 589.3v-9.4h1v9.4zM880 589.3v-9.4h1v9.4zM881 589.3v-9.4h1v9.4zM889 598.7v-37.6h1v37.6zM890 598.7v-37.6h1v37.6zM892 598.7v-18.8h1v18.8zM893 598.7v-18.8h1v18.8z" fill="#8cd02e"/>
<rect x="892" y="429" width="1.4" height="188" fill="#9c10a8"/>
<rect x="282" y="570" width="5" height="1" fill="#222"/>
<rect x="282" y="524" width="5" height="1" fill="#222"/>
<rect x="282" y="476" width="5" height="1" fill="#222"/>
<rect x="282" y="430" width="5" height="1" fill="#222"/>
<rect x="290" y="412" width="9" height="12" fill="#008000"/>
<rect x="332.5" y="412" width="9" height="12" fill="#8080ff"/>
<rect x="384" y="406" width="9" height="4" fill="#000"/>
<g font-size="15.7px" fill="#1a1a1a" shape-rendering="geometricPrecision"><text x="281.5" y="576.1" text-anchor="end">5</text><text x="281.5" y="529.1" text-anchor="end">10</text><text x="281.5" y="482.1" text-anchor="end">15</text><text x="281.5" y="435.1" text-anchor="end">20</text><text x="943.5" y="585.5">2%</text><text x="943.5" y="547.9">4%</text><text x="943.5" y="510.3">6%</text><text x="943.5" y="472.7">8%</text><text x="943.5" y="435.1">10%</text><text x="287.4" y="631.8" text-anchor="middle">0.0</text><text x="352.2" y="631.8" text-anchor="middle">5.0</text><text x="417.1" y="631.8" text-anchor="middle">10.0</text><text x="481.9" y="631.8" text-anchor="middle">15.0</text><text x="546.8" y="631.8" text-anchor="middle">20.0</text><text x="611.6" y="631.8" text-anchor="middle">25.0</text><text x="676.5" y="631.8" text-anchor="middle">30.0</text><text x="741.4" y="631.8" text-anchor="middle">35.0</text><text x="806.2" y="631.8" text-anchor="middle">40.0</text><text x="871.0" y="631.8" text-anchor="middle">45.0</text><text x="965" y="631.8" text-anchor="end">50.0 GB</text><text x="304" y="424.1">BIS</text><text x="346" y="424.1">Jitter</text></g>
</svg>
<span class="t" id="t32" style="left:382.6px;top:648.5px;font-size:16.5px;line-height:16.5px;color:#111;transform:scaleX(0.8905);">LDC</span>
<span class="t" id="t33" style="left:470.5px;top:648.5px;font-size:16.5px;line-height:16.5px;color:#111;transform:scaleX(0.8268);">BIS</span>
<span class="t" id="t34" style="left:248.4px;top:673.6px;font-size:16.5px;line-height:16.5px;color:#111;transform:scaleX(0.9630);">Avg</span>
<span class="t" id="t35" style="left:382.2px;top:673.6px;font-size:16.5px;line-height:16.5px;color:#2222dd;transform:scaleX(0.9276);">7.57</span>
<span class="t" id="t36" style="left:463.0px;top:673.6px;font-size:16.5px;line-height:16.5px;color:#2222dd;transform:scaleX(0.9339);">0.13</span>
<span class="t" id="t37" style="left:248.4px;top:698.3px;font-size:16.5px;line-height:16.5px;color:#111;transform:scaleX(0.9945);">Max</span>
<span class="t" id="t38" style="left:387.2px;top:698.3px;font-size:16.5px;line-height:16.5px;color:#2222dd;transform:scaleX(0.9008);">542</span>
<span class="t" id="t39" style="left:477.5px;top:698.3px;font-size:16.5px;line-height:16.5px;color:#2222dd;transform:scaleX(0.8606);">13</span>
<span class="t" id="t40" style="left:245.4px;top:722.3px;font-size:16.5px;line-height:16.5px;color:#111;transform:scaleX(1.0299);">Total</span>
<span class="t" id="t41" style="left:349.7px;top:722.3px;font-size:16.5px;line-height:16.5px;color:#2222dd;transform:scaleX(0.9696);">5782390</span>
<span class="t" id="t42" style="left:441.5px;top:722.3px;font-size:16.5px;line-height:16.5px;color:#2222dd;transform:scaleX(0.9353);">100057</span>
<svg class="abs" style="left:596px;top:647px" width="20" height="20" viewBox="0 0 20 20"><rect x="0.9" y="0.9" width="18.2" height="18.2" fill="#fff" stroke="#3a3a3a" stroke-width="1.5"/><path d="M4 10 L8 14 L16 5" fill="none" stroke="#3a3a3a" stroke-width="1.5"/></svg>
<span class="t" id="t43" style="left:630.0px;top:650.4px;font-size:16.5px;line-height:16.5px;color:#111;transform:scaleX(1.0233);">Jitter</span>
<span class="t" id="t44" style="left:626.6px;top:673.5px;font-size:16.5px;line-height:16.5px;color:#2222dd;transform:scaleX(0.9279);">-0.1%</span>
<span class="t" id="t45" style="left:632.0px;top:698.3px;font-size:16.5px;line-height:16.5px;color:#2222dd;transform:scaleX(0.9200);">0.0%</span>
<span class="t" id="t46" style="left:695.8px;top:655.6px;font-size:16.5px;line-height:16.5px;color:#111;transform:scaleX(0.9766);">Speed</span>
<span class="t" id="t47" style="left:784.0px;top:655.6px;font-size:16.5px;line-height:16.5px;color:#2222dd;transform:scaleX(0.9430);">1.76 X</span>
<span class="t" id="t48" style="left:695.8px;top:698.3px;font-size:16.5px;line-height:16.5px;color:#111;transform:scaleX(1.0425);">Position</span>
<span class="t" id="t49" style="left:784.0px;top:698.3px;font-size:16.5px;line-height:16.5px;color:#2222dd;transform:scaleX(0.9811);">47731 MB</span>
<span class="t" id="t50" style="left:695.8px;top:721.6px;font-size:16.5px;line-height:16.5px;color:#111;transform:scaleX(0.9532);">Samples</span>
<span class="t" id="t51" style="left:784.0px;top:721.6px;font-size:16.5px;line-height:16.5px;color:#2222dd;transform:scaleX(0.9625);">761947</span>
<div class="btn" style="left:866.5px;top:645px;width:112.5px;height:30.5px;"></div>
<span class="t" id="t52" style="left:872.8px;top:652.2px;font-size:16.5px;line-height:16.5px;color:#111;transform:scaleX(0.9395);">4.0 X</span>
<svg class="abs" style="left:958.5px;top:656.8px" width="14" height="9" viewBox="0 0 14 9"><path d="M1 1.2 L7 7.2 L13 1.2" fill="none" stroke="#555" stroke-width="1.25"/></svg>
<div class="btn" style="left:867.5px;top:681px;width:110px;height:30.5px;"></div>
<span class="t" id="t53" style="left:889.0px;top:687.6px;font-size:16.5px;line-height:16.5px;color:#111;transform:scaleX(1.0738);">Start full</span>
<div class="btn" style="left:866.5px;top:721px;width:110px;height:30.5px;"></div>
<span class="t" id="t54" style="left:885.3px;top:728.5px;font-size:16.5px;line-height:16.5px;color:#111;transform:scaleX(1.0416);">Start part</span>
<div class="abs" style="left:5px;top:759px;width:989px;height:25px;background:#f1f1f5;"></div><div class="abs" style="left:5px;top:759px;width:212px;height:25px;background:#f0f0f0;"></div>
<div class="abs" style="left:5px;top:758px;width:233px;height:1px;background:#d6d6dc;"></div>
<span class="t" id="t55" style="left:8.8px;top:765.7px;font-size:17px;line-height:17px;color:#111;transform:scaleX(0.9419);">Test completed</span>
<div class="abs" style="left:223px;top:760px;width:452px;height:24px;background:#f8f8fa;"></div>
<div class="abs" style="left:224px;top:765px;width:450.5px;height:17px;background:#06b025;"></div>
<div class="abs" style="left:678px;top:760px;width:1px;height:24px;background:#dcdce2;"></div>
<div class="abs" style="left:764px;top:760px;width:1px;height:24px;background:#dcdce2;"></div>
<span class="t" id="t56" style="left:686.2px;top:765.9px;font-size:17px;line-height:17px;color:#111;transform:scaleX(0.8843);">100.0%</span>
<span class="t" id="t57" style="left:907.8px;top:765.9px;font-size:17px;line-height:17px;color:#111;transform:scaleX(0.9401);">62:40</span>
<svg class="abs" style="left:972px;top:770px" width="14" height="14" viewBox="0 0 14 14" shape-rendering="crispEdges"><g fill="#b8b8c4"><rect x="9" y="3" width="2" height="2"/><rect x="9" y="7" width="2" height="2"/><rect x="5" y="7" width="2" height="2"/><rect x="9" y="11" width="2" height="2"/><rect x="5" y="11" width="2" height="2"/><rect x="1" y="11" width="2" height="2"/></g></svg>
</body></html>
